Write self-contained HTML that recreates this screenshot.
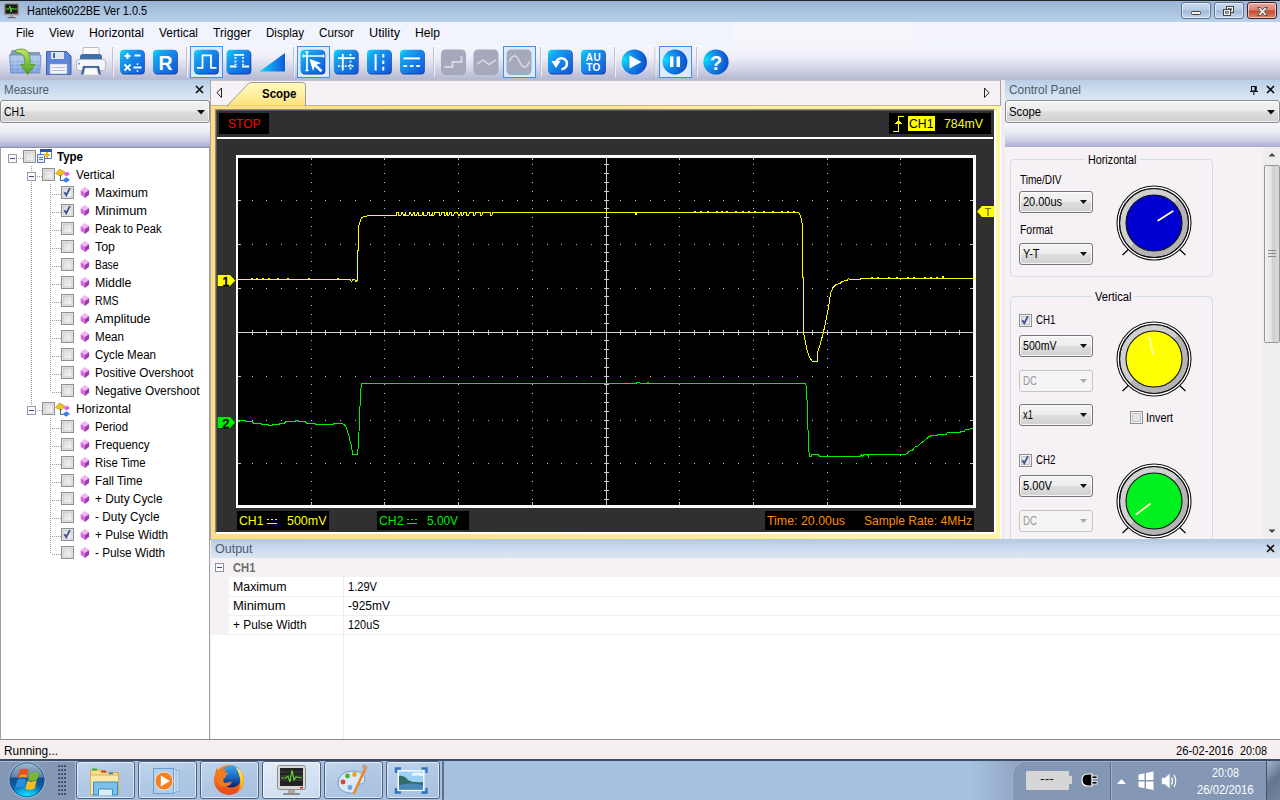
<!DOCTYPE html>
<html><head><meta charset="utf-8"><title>Hantek6022BE Ver 1.0.5</title>
<style>
html,body{margin:0;padding:0;}
body{width:1280px;height:800px;overflow:hidden;position:relative;background:#fff;font-family:"Liberation Sans",sans-serif;font-size:12px;}
body div,body svg,body span.t{position:absolute;}
span.t{white-space:nowrap;transform-origin:0 0;display:block;}
svg{overflow:visible}
</style></head><body>
<!-- p_chrome -->
<div style="left:0px;top:0px;width:1280px;height:22px;background:linear-gradient(#98b3d5,#a6c0de 45%,#b9d1ea);"></div>
<div style="left:0px;top:0px;width:1280px;height:1px;background:#222;"></div>
<svg style="left:3px;top:2px" width="18" height="18" viewBox="0 0 18 18">
<rect x="1" y="1" width="15" height="12" rx="1" fill="#7c7c7c" stroke="#b4b4b4" stroke-width="1"/>
<rect x="2.5" y="2.5" width="12" height="9" fill="#1c1c1c"/>
<polyline points="3,7 6,7 7,4 8,10 9,6 10,7 14,7" fill="none" stroke="#5ad02a" stroke-width="1"/>
<rect x="12.5" y="11.5" width="2" height="1" fill="#e02020"/>
<rect x="7" y="13" width="3" height="2" fill="#9a9a9a"/><rect x="4.5" y="15" width="8" height="1.2" fill="#6a6a6a"/>
</svg>
<span class="t" style="left:27px;top:3px;font-size:12px;line-height:16px;color:#000;transform:scaleX(0.9088);">Hantek6022BE Ver 1.0.5</span>
<div style="left:1181.4px;top:2px;width:30px;height:17px;background:linear-gradient(#c9daee,#b6cbe3 48%,#9fb8d6 52%,#c3d7ee);border:1px solid #5d7392;border-radius:3px;box-sizing:border-box;box-shadow:inset 0 0 0 1px rgba(255,255,255,.55)"></div>
<div style="left:1214.4px;top:2px;width:30px;height:17px;background:linear-gradient(#c9daee,#b6cbe3 48%,#9fb8d6 52%,#c3d7ee);border:1px solid #5d7392;border-radius:3px;box-sizing:border-box;box-shadow:inset 0 0 0 1px rgba(255,255,255,.55)"></div>
<div style="left:1247.4px;top:2px;width:30px;height:17px;background:linear-gradient(#e9a99c,#dc8070 48%,#c44a2e 52%,#d98670);border:1px solid #4a1c20;border-radius:3px;box-sizing:border-box;box-shadow:inset 0 0 0 1px rgba(255,255,255,.55)"></div>
<svg style="left:1181.4px;top:2.5px" width="97" height="17" viewBox="0 0 97 17">
<rect x="10.5" y="8.5" width="9" height="3" rx="1" fill="#f4f4f4" stroke="#444" stroke-width="1"/>
<rect x="45.5" y="3.5" width="7" height="6" fill="#f4f4f4" stroke="#444"/><rect x="47.5" y="5.5" width="3" height="2" fill="#9fb8d6" stroke="#444" stroke-width=".6"/>
<rect x="42.5" y="6.5" width="7" height="6" fill="#f4f4f4" stroke="#444"/><rect x="44.5" y="8.5" width="3" height="2" fill="#9fb8d6" stroke="#444" stroke-width=".6"/>
<path d="M76.5 4.5 L79.5 4.5 L81.5 7 L83.5 4.5 L86.5 4.5 L83.3 8.5 L86.5 12.5 L83.5 12.5 L81.5 10 L79.5 12.5 L76.5 12.5 L79.7 8.5 Z" fill="#f6f6f6" stroke="#555" stroke-width="1"/>
</svg>
<div style="left:0px;top:22px;width:1280px;height:23px;background:#f1f3fd;"></div>
<div style="left:732px;top:23px;width:181px;height:21px;background:#f7f4fa;"></div>
<div style="left:913px;top:23px;width:367px;height:21px;background:#f4f4fc;"></div>
<span class="t" style="left:16px;top:26px;font-size:12px;line-height:15px;color:#000;transform:scaleX(0.9305);">File</span>
<span class="t" style="left:49px;top:26px;font-size:12px;line-height:15px;color:#000;transform:scaleX(0.9691);">View</span>
<span class="t" style="left:89px;top:26px;font-size:12px;line-height:15px;color:#000;transform:scaleX(1.0179);">Horizontal</span>
<span class="t" style="left:159px;top:26px;font-size:12px;line-height:15px;color:#000;transform:scaleX(0.9909);">Vertical</span>
<span class="t" style="left:213px;top:26px;font-size:12px;line-height:15px;color:#000;transform:scaleX(1.0112);">Trigger</span>
<span class="t" style="left:266px;top:26px;font-size:12px;line-height:15px;color:#000;transform:scaleX(0.9655);">Display</span>
<span class="t" style="left:319px;top:26px;font-size:12px;line-height:15px;color:#000;transform:scaleX(0.9718);">Cursor</span>
<span class="t" style="left:369px;top:26px;font-size:12px;line-height:15px;color:#000;transform:scaleX(1.0564);">Utility</span>
<span class="t" style="left:415px;top:26px;font-size:12px;line-height:15px;color:#000;transform:scaleX(1.0127);">Help</span>
<div style="left:0px;top:45px;width:1280px;height:35px;background:linear-gradient(#f6f6fd,#eeeef8 35%,#d5d7e8 65%,#b3b7d2);"></div>
<div style="left:0px;top:79px;width:1280px;height:1px;background:#b9bcd0;"></div>
<!-- p_toolbar -->
<svg style="left:0;top:0" width="760" height="80" viewBox="0 0 760 80">
<defs>
<linearGradient id="gb" x1="0" y1="0" x2="1" y2="1"><stop offset="0" stop-color="#08e4ff"/><stop offset=".22" stop-color="#18a4ee"/><stop offset=".55" stop-color="#1580e6"/><stop offset="1" stop-color="#0c58d8"/></linearGradient>
<linearGradient id="gt" x1="0" y1="0" x2="1" y2="0"><stop offset="0" stop-color="#08dcff"/><stop offset=".6" stop-color="#1488e8"/><stop offset="1" stop-color="#0c5cd8"/></linearGradient>
<radialGradient id="gc" cx=".1" cy=".4" r=".95"><stop offset="0" stop-color="#08e0ff"/><stop offset=".4" stop-color="#1690ea"/><stop offset="1" stop-color="#0a48c8"/></radialGradient>
<linearGradient id="gfold" x1="0" y1="0" x2="0" y2="1"><stop offset="0" stop-color="#b8cdea"/><stop offset="1" stop-color="#7099da"/></linearGradient>
<linearGradient id="garrow" x1="0" y1="0" x2="0" y2="1"><stop offset="0" stop-color="#c4e46a"/><stop offset="1" stop-color="#4aa020"/></linearGradient>
</defs>
<g>
<path d="M10.500 55 l1.500 -4.500 h8 l2 2 h17.500 v4z" fill="#8c9db8" stroke="#74869f" stroke-width=".8"/>
<path d="M9.500 55 h31.500 l-1.200 18 h-29z" fill="url(#gfold)" stroke="#6f8fc4" stroke-width=".9"/>
<path d="M10.500 59.500 h30 M10.500 63.500 h30 M11 67.500 h29 M11 71 h29 M15 55.500 v17 M20 55.500 v17 M25 55.500 v17 M30 55.500 v17 M35 55.500 v17" stroke="#d4e2f6" stroke-width=".5" stroke-opacity=".6"/>
<path d="M15.700 50 q8 -2.500 12 1.500 q2.600 3 2.600 13 h4.700 l-7.300 10 l-7.300 -10 h4.400 q.3 -7 -2 -9.500 q-2 -2.300 -7.100 -2.500z" fill="url(#garrow)" stroke="#4c9620" stroke-width=".8"/>
</g>
<g>
<path d="M46.500 51.500 h20 l4.500 4.500 v18.500 h-24.500z" fill="#5c86d6" stroke="#3f5fae"/>
<rect x="51" y="52" width="13" height="7" fill="#dfe6f4"/><rect x="53" y="53" width="2" height="5" fill="#4a68b0"/>
<rect x="50" y="64" width="17" height="10" fill="#f2f4fa" stroke="#9aa8cc" stroke-width=".6"/>
<rect x="52" y="67" width="13" height="1" fill="#b8c2dc"/><rect x="52" y="70" width="13" height="1" fill="#b8c2dc"/>
</g>
<g>
<rect x="83" y="47.500" width="16" height="9" rx="1" fill="#fbfbfd" stroke="#b9bccc"/>
<path d="M80 57 q0 -3 3 -3 h16 q3 0 3 3 v3 h-22z" fill="#3f6fa8"/>
<rect x="76.500" y="59.500" width="29" height="11" rx="2.500" fill="#f4f5f9" stroke="#b4b8c8"/>
<rect x="78" y="63" width="2" height="1.500" fill="#5aa0e0"/>
<path d="M83 66 h16 l2 8.500 h-20z" fill="#3a5f98"/>
<path d="M85 68 h12 l1.500 7 h-15z" fill="#fafafa" stroke="#c4c6d0" stroke-width=".6"/>
</g>
<rect x="112" y="47" width="1" height="30" fill="#c4c0cc"/><rect x="113" y="47" width="1" height="30" fill="#f6f6fc" fill-opacity=".8"/>
<rect x="120.6" y="50.5" width="24.2" height="24" rx="4" fill="#1c3c9c"/><rect x="120" y="49.7" width="24.1" height="23.9" rx="4" fill="url(#gb)"/>
<g stroke="#fff" stroke-width="2" fill="#fff">
<path d="M124.500 56 h6 M127.500 53 v6" /><path d="M134.500 55.500 h6"/>
<path d="M124.500 64.500 l6 6 M130.500 64.500 l-6 6" stroke-width="1.800"/>
<path d="M133.500 67.500 h8"/><rect x="136.700" y="63.300" width="1.600" height="1.600" stroke="none"/><rect x="136.700" y="70.200" width="1.600" height="1.600" stroke="none"/></g>
<rect x="153.6" y="50.5" width="24.2" height="24" rx="4" fill="#1c3c9c"/><rect x="153" y="49.7" width="24.1" height="23.9" rx="4" fill="url(#gb)"/>
<text x="165.500" y="70" font-family="Liberation Sans,sans-serif" font-weight="bold" font-size="19.5" fill="#fff" text-anchor="middle">R</text>
<rect x="186" y="47" width="1" height="30" fill="#c4c0cc"/><rect x="187" y="47" width="1" height="30" fill="#f6f6fc" fill-opacity=".8"/>
<rect x="190.5" y="46.5" width="32" height="31" fill="#deeafb" stroke="#3d8ff0"/>
<rect x="194.6" y="50.5" width="24.2" height="24" rx="4" fill="#1c3c9c"/><rect x="194" y="49.7" width="24.1" height="23.9" rx="4" fill="url(#gb)"/>
<path d="M197 67.800 h5.500 v-12.500 h8.500 v12.500 h5.500" fill="none" stroke="#fff" stroke-width="1.800"/>
<rect x="227.1" y="50.5" width="24.2" height="24" rx="4" fill="#1c3c9c"/><rect x="226.5" y="49.7" width="24.1" height="23.9" rx="4" fill="url(#gb)"/>
<path d="M230 66.500 h6.500 M242 66.500 h7 M234 54.800 h10" fill="none" stroke="#fff" stroke-width="1.800"/><path d="M235.500 57 v8 M243 57 v8" fill="none" stroke="#fff" stroke-width="1.800" stroke-dasharray="1.800 1.600"/>
<path d="M259.500 71.500 L285 71.500 L285 53 Z" fill="url(#gt)"/>
<rect x="293" y="47" width="1" height="30" fill="#c4c0cc"/><rect x="294" y="47" width="1" height="30" fill="#f6f6fc" fill-opacity=".8"/>
<rect x="297.5" y="46.5" width="32" height="31" fill="#deeafb" stroke="#3d8ff0"/>
<rect x="301.1" y="50.5" width="24.2" height="24" rx="4" fill="#1c3c9c"/><rect x="300.5" y="49.7" width="24.1" height="23.9" rx="4" fill="url(#gb)"/>
<path d="M303 56 h21 M307 51.500 v19.500 M305.500 52 h3 M305.500 70.500 h3 M303.500 54.500 v3 M323.500 54.500 v3" stroke="#fff" stroke-width="1.700" fill="none"/><path d="M309.500 59 l11.500 4 l-4.500 1.800 l6 5.500 l-2 2 l-5.800 -5.800 l-1.700 4.500z" fill="#fff"/>
<rect x="334.4" y="50.5" width="24.2" height="24" rx="4" fill="#1c3c9c"/><rect x="333.8" y="49.7" width="24.1" height="23.9" rx="4" fill="url(#gb)"/>
<path d="M338 58.200 h17 M342.800 54 v16.500" stroke="#fff" stroke-width="1.800" fill="none"/><path d="M338 66.200 h17 M350.500 54 v16.500" stroke="#fff" stroke-width="1.800" stroke-dasharray="1.800 1.600" fill="none"/>
<rect x="367.6" y="50.5" width="24.2" height="24" rx="4" fill="#1c3c9c"/><rect x="367" y="49.7" width="24.1" height="23.9" rx="4" fill="url(#gb)"/>
<path d="M375.600 54 v16.500" stroke="#fff" stroke-width="2" fill="none"/><path d="M383.300 54 v16.500" stroke="#fff" stroke-width="2" stroke-dasharray="3.600 2.800" fill="none"/>
<rect x="400.6" y="50.5" width="24.2" height="24" rx="4" fill="#1c3c9c"/><rect x="400" y="49.7" width="24.1" height="23.9" rx="4" fill="url(#gb)"/>
<path d="M403.500 58.400 h16.500" stroke="#fff" stroke-width="2" fill="none"/><path d="M403.500 66 h16.500" stroke="#fff" stroke-width="2" stroke-dasharray="3.600 2.800" fill="none"/>
<rect x="433" y="47" width="1" height="30" fill="#c4c0cc"/><rect x="434" y="47" width="1" height="30" fill="#f6f6fc" fill-opacity=".8"/>
<rect x="441" y="49.5" width="25" height="25.5" rx="4.500" fill="#a6a9bb"/>
<path d="M444.500 67 h8 v-5 h9 v-6" fill="none" stroke="#d4d6e0" stroke-width="2"/>
<rect x="473.5" y="49.5" width="25" height="25.5" rx="4.500" fill="#a6a9bb"/>
<path d="M477 64 l6 -4 l6 4.500 l7 -4.500" fill="none" stroke="#d4d6e0" stroke-width="1.600"/>
<rect x="503.5" y="46.5" width="32" height="31" fill="#deeafb" stroke="#3d8ff0"/>
<rect x="506.5" y="49.5" width="25" height="25.5" rx="4.500" fill="#a6a9bb"/>
<path d="M509.500 61.500 c3 -7.500 7 -7.500 10 0 s7 7.500 10 0" fill="none" stroke="#d4d6e0" stroke-width="1.600"/>
<rect x="540" y="47" width="1" height="30" fill="#c4c0cc"/><rect x="541" y="47" width="1" height="30" fill="#f6f6fc" fill-opacity=".8"/>
<rect x="548.6" y="50.5" width="24.2" height="24" rx="4" fill="#1c3c9c"/><rect x="548" y="49.7" width="24.1" height="23.9" rx="4" fill="url(#gb)"/>
<path d="M556 64.500 a5.500 5.500 0 1 1 5.500 4.700" fill="none" stroke="#fff" stroke-width="2.600"/><path d="M551.500 61 l9 0 l-4.500 7z" fill="#fff"/>
<rect x="581.6" y="50.5" width="24.2" height="24" rx="4" fill="#1c3c9c"/><rect x="581" y="49.7" width="24.1" height="23.9" rx="4" fill="url(#gb)"/>
<text x="593.500" y="60.500" font-family="Liberation Sans,sans-serif" font-weight="bold" font-size="10" fill="#fff" text-anchor="middle" letter-spacing=".5">AU</text><text x="593.500" y="70.500" font-family="Liberation Sans,sans-serif" font-weight="bold" font-size="10" fill="#fff" text-anchor="middle" letter-spacing=".5">TO</text>
<rect x="614" y="47" width="1" height="30" fill="#c4c0cc"/><rect x="615" y="47" width="1" height="30" fill="#f6f6fc" fill-opacity=".8"/>
<circle cx="634.300" cy="62" r="12.600" fill="url(#gc)"/><path d="M629.500 55.500 l12 6.500 l-12 6.500z" fill="#fff"/>
<rect x="654.5" y="47" width="1" height="30" fill="#c4c0cc"/><rect x="655.5" y="47" width="1" height="30" fill="#f6f6fc" fill-opacity=".8"/>
<rect x="659.5" y="46.5" width="32" height="31" fill="#deeafb" stroke="#3d8ff0"/>
<circle cx="675" cy="62" r="12.400" fill="url(#gc)"/><rect x="670" y="56.500" width="3.400" height="10.500" fill="#fff"/><rect x="676.600" y="56.500" width="3.400" height="10.500" fill="#fff"/>
<rect x="696" y="47" width="1" height="30" fill="#c4c0cc"/><rect x="697" y="47" width="1" height="30" fill="#f6f6fc" fill-opacity=".8"/>
<circle cx="716" cy="62" r="12.600" fill="url(#gc)"/><text x="716" y="69.500" font-family="Liberation Sans,sans-serif" font-weight="bold" font-size="20" fill="#fff" text-anchor="middle">?</text>
</svg>
<!-- p_left -->
<div style="left:0px;top:80px;width:211px;height:660px;background:#f5f0f4;"></div>
<div style="left:0px;top:80px;width:210px;height:20px;background:linear-gradient(#b9cde6,#cbdbee 45%,#dce7f4);"></div>
<span class="t" style="left:4px;top:82px;font-size:12px;line-height:16px;color:#4d5b70;transform:scaleX(0.9639);">Measure</span>
<svg style="left:195px;top:85px" width="9" height="9"><path d="M1 1 L8 8 M8 1 L1 8" stroke="#111" stroke-width="1.700" fill="none"/></svg>
<div style="left:0px;top:100px;width:210px;height:23px;background:linear-gradient(#f3f3f3,#ebebeb 48%,#dcdcdc 52%,#d0d0d0);border:1px solid #8a8a8f;border-radius:3px;box-sizing:border-box;box-shadow:inset 0 0 0 1px rgba(255,255,255,.7)"></div>
<svg style="left:197px;top:110px" width="9" height="5"><path d="M0 0 h8 l-4 4.500z" fill="#111"/></svg>
<span class="t" style="left:4px;top:104px;font-size:12px;line-height:16px;color:#000;transform:scaleX(0.8744);">CH1</span>
<div style="left:0px;top:123px;width:210px;height:24px;background:linear-gradient(#f7f7fc,#ececf6 35%,#cfd1e5 70%,#a9add0);"></div>
<div style="left:0px;top:147px;width:210px;height:593px;background:#fff;border:1px solid #a0a0a0;border-top-color:#8c8fa8;box-sizing:border-box"></div>
<svg style="left:0;top:147px" width="210" height="420" viewBox="0 147 210 420">
<defs><linearGradient id="cbg" x1="0" y1="0" x2="1" y2="1"><stop offset="0" stop-color="#d6d7d8"/><stop offset="1" stop-color="#f8f8f8"/></linearGradient></defs>
<path d="M18 158.500 h5" stroke="#9a9a9a" stroke-width="1" stroke-dasharray="1 1" fill="none"/>
<path d="M31.500 166 v240" stroke="#9a9a9a" stroke-width="1" stroke-dasharray="1 1" fill="none"/>
<path d="M37 176.500 h5 M37 410.500 h5" stroke="#9a9a9a" stroke-width="1" stroke-dasharray="1 1" fill="none"/>
<path d="M50.500 184 v208" stroke="#9a9a9a" stroke-width="1" stroke-dasharray="1 1" fill="none"/>
<path d="M50.500 418 v136" stroke="#9a9a9a" stroke-width="1" stroke-dasharray="1 1" fill="none"/>
<rect x="8.5" y="154.5" width="8" height="8" fill="#fafafa" stroke="#959aa5"/><rect x="10" y="158" width="5" height="1" fill="#3a4a9a"/>
<rect x="23.5" y="150.5" width="12" height="12" fill="#f4f4f4" stroke="#8e8f8f"/><rect x="25" y="152" width="9" height="9" fill="url(#cbg)" stroke="#c8c9ca" stroke-width="1"/>
<g><rect x="40.500" y="149.500" width="11" height="9" fill="#fff" stroke="#5a78c0"/><rect x="40" y="149" width="12" height="3" fill="#2a50b0"/><rect x="37.500" y="154.500" width="7" height="8" fill="#eaf0fa" stroke="#5a78c0"/><path d="M39 157.500 h4 M39 159.500 h4" stroke="#5a78c0"/><path d="M44 155 h6 M47 152 v6" stroke="#e8b820" stroke-width="2"/></g>
<rect x="27.5" y="172.5" width="8" height="8" fill="#fafafa" stroke="#959aa5"/><rect x="29" y="176" width="5" height="1" fill="#3a4a9a"/>
<rect x="42.5" y="168.5" width="12" height="12" fill="#f4f4f4" stroke="#8e8f8f"/><rect x="44" y="170" width="9" height="9" fill="url(#cbg)" stroke="#c8c9ca" stroke-width="1"/>
<g><path d="M55.500 173.5 l4 -4.500 l5.500 3 l-4 4.500z" fill="#f0c020" stroke="#b08a10" stroke-width=".6"/>
<path d="M63.500 174 l3.500 -2.500 l3 2.500 l-3.500 2.500z" fill="#e060e0"/>
<path d="M62.500 180 l4 -2.800 l3.500 2.800 l-4 2.800z" fill="#3a80e0"/>
<path d="M60.500 175 v5.500 h2.500" fill="none" stroke="#4060a0" stroke-width="1"/></g>
<rect x="27.5" y="406.5" width="8" height="8" fill="#fafafa" stroke="#959aa5"/><rect x="29" y="410" width="5" height="1" fill="#3a4a9a"/>
<rect x="42.5" y="402.5" width="12" height="12" fill="#f4f4f4" stroke="#8e8f8f"/><rect x="44" y="404" width="9" height="9" fill="url(#cbg)" stroke="#c8c9ca" stroke-width="1"/>
<g><path d="M55.500 407.5 l4 -4.500 l5.500 3 l-4 4.500z" fill="#f0c020" stroke="#b08a10" stroke-width=".6"/>
<path d="M63.500 408 l3.500 -2.500 l3 2.500 l-3.500 2.500z" fill="#e060e0"/>
<path d="M62.500 414 l4 -2.800 l3.500 2.800 l-4 2.800z" fill="#3a80e0"/>
<path d="M60.500 409 v5.500 h2.500" fill="none" stroke="#4060a0" stroke-width="1"/></g>
<path d="M52 194.5 h9" stroke="#9a9a9a" stroke-width="1" stroke-dasharray="1 1" fill="none"/>
<rect x="61.5" y="186.5" width="12" height="12" fill="#f4f4f4" stroke="#8e8f8f"/><rect x="63" y="188" width="9" height="9" fill="url(#cbg)" stroke="#c8c9ca" stroke-width="1"/><path d="M64.3 192.2 l2 3 l3.600 -7" fill="none" stroke="#3b4f8c" stroke-width="1.800"/>
<path d="M80.7 190 l4.200 -3 l4.200 3 l-4.200 3z" fill="#f3b4f2"/><path d="M80.7 190 l4.200 3 v5 l-4.200 -3.200z" fill="#d468dc"/><path d="M84.9 193 l4.200 -3 v4.800 l-4.200 3.200z" fill="#9a3cb0"/>
<path d="M52 212.5 h9" stroke="#9a9a9a" stroke-width="1" stroke-dasharray="1 1" fill="none"/>
<rect x="61.5" y="204.5" width="12" height="12" fill="#f4f4f4" stroke="#8e8f8f"/><rect x="63" y="206" width="9" height="9" fill="url(#cbg)" stroke="#c8c9ca" stroke-width="1"/><path d="M64.3 210.2 l2 3 l3.600 -7" fill="none" stroke="#3b4f8c" stroke-width="1.800"/>
<path d="M80.7 208 l4.200 -3 l4.200 3 l-4.200 3z" fill="#f3b4f2"/><path d="M80.7 208 l4.200 3 v5 l-4.200 -3.200z" fill="#d468dc"/><path d="M84.9 211 l4.200 -3 v4.800 l-4.200 3.200z" fill="#9a3cb0"/>
<path d="M52 230.5 h9" stroke="#9a9a9a" stroke-width="1" stroke-dasharray="1 1" fill="none"/>
<rect x="61.5" y="222.5" width="12" height="12" fill="#f4f4f4" stroke="#8e8f8f"/><rect x="63" y="224" width="9" height="9" fill="url(#cbg)" stroke="#c8c9ca" stroke-width="1"/>
<path d="M80.7 226 l4.200 -3 l4.200 3 l-4.200 3z" fill="#f3b4f2"/><path d="M80.7 226 l4.200 3 v5 l-4.200 -3.200z" fill="#d468dc"/><path d="M84.9 229 l4.200 -3 v4.800 l-4.200 3.200z" fill="#9a3cb0"/>
<path d="M52 248.5 h9" stroke="#9a9a9a" stroke-width="1" stroke-dasharray="1 1" fill="none"/>
<rect x="61.5" y="240.5" width="12" height="12" fill="#f4f4f4" stroke="#8e8f8f"/><rect x="63" y="242" width="9" height="9" fill="url(#cbg)" stroke="#c8c9ca" stroke-width="1"/>
<path d="M80.7 244 l4.200 -3 l4.200 3 l-4.200 3z" fill="#f3b4f2"/><path d="M80.7 244 l4.200 3 v5 l-4.200 -3.200z" fill="#d468dc"/><path d="M84.9 247 l4.200 -3 v4.800 l-4.200 3.200z" fill="#9a3cb0"/>
<path d="M52 266.5 h9" stroke="#9a9a9a" stroke-width="1" stroke-dasharray="1 1" fill="none"/>
<rect x="61.5" y="258.5" width="12" height="12" fill="#f4f4f4" stroke="#8e8f8f"/><rect x="63" y="260" width="9" height="9" fill="url(#cbg)" stroke="#c8c9ca" stroke-width="1"/>
<path d="M80.7 262 l4.200 -3 l4.200 3 l-4.200 3z" fill="#f3b4f2"/><path d="M80.7 262 l4.200 3 v5 l-4.200 -3.200z" fill="#d468dc"/><path d="M84.9 265 l4.200 -3 v4.800 l-4.200 3.200z" fill="#9a3cb0"/>
<path d="M52 284.5 h9" stroke="#9a9a9a" stroke-width="1" stroke-dasharray="1 1" fill="none"/>
<rect x="61.5" y="276.5" width="12" height="12" fill="#f4f4f4" stroke="#8e8f8f"/><rect x="63" y="278" width="9" height="9" fill="url(#cbg)" stroke="#c8c9ca" stroke-width="1"/>
<path d="M80.7 280 l4.200 -3 l4.200 3 l-4.200 3z" fill="#f3b4f2"/><path d="M80.7 280 l4.200 3 v5 l-4.200 -3.200z" fill="#d468dc"/><path d="M84.9 283 l4.200 -3 v4.800 l-4.200 3.200z" fill="#9a3cb0"/>
<path d="M52 302.5 h9" stroke="#9a9a9a" stroke-width="1" stroke-dasharray="1 1" fill="none"/>
<rect x="61.5" y="294.5" width="12" height="12" fill="#f4f4f4" stroke="#8e8f8f"/><rect x="63" y="296" width="9" height="9" fill="url(#cbg)" stroke="#c8c9ca" stroke-width="1"/>
<path d="M80.7 298 l4.200 -3 l4.200 3 l-4.200 3z" fill="#f3b4f2"/><path d="M80.7 298 l4.200 3 v5 l-4.200 -3.200z" fill="#d468dc"/><path d="M84.9 301 l4.200 -3 v4.800 l-4.200 3.200z" fill="#9a3cb0"/>
<path d="M52 320.5 h9" stroke="#9a9a9a" stroke-width="1" stroke-dasharray="1 1" fill="none"/>
<rect x="61.5" y="312.5" width="12" height="12" fill="#f4f4f4" stroke="#8e8f8f"/><rect x="63" y="314" width="9" height="9" fill="url(#cbg)" stroke="#c8c9ca" stroke-width="1"/>
<path d="M80.7 316 l4.200 -3 l4.200 3 l-4.200 3z" fill="#f3b4f2"/><path d="M80.7 316 l4.200 3 v5 l-4.200 -3.200z" fill="#d468dc"/><path d="M84.9 319 l4.200 -3 v4.800 l-4.200 3.200z" fill="#9a3cb0"/>
<path d="M52 338.5 h9" stroke="#9a9a9a" stroke-width="1" stroke-dasharray="1 1" fill="none"/>
<rect x="61.5" y="330.5" width="12" height="12" fill="#f4f4f4" stroke="#8e8f8f"/><rect x="63" y="332" width="9" height="9" fill="url(#cbg)" stroke="#c8c9ca" stroke-width="1"/>
<path d="M80.7 334 l4.200 -3 l4.200 3 l-4.200 3z" fill="#f3b4f2"/><path d="M80.7 334 l4.200 3 v5 l-4.200 -3.200z" fill="#d468dc"/><path d="M84.9 337 l4.200 -3 v4.800 l-4.200 3.200z" fill="#9a3cb0"/>
<path d="M52 356.5 h9" stroke="#9a9a9a" stroke-width="1" stroke-dasharray="1 1" fill="none"/>
<rect x="61.5" y="348.5" width="12" height="12" fill="#f4f4f4" stroke="#8e8f8f"/><rect x="63" y="350" width="9" height="9" fill="url(#cbg)" stroke="#c8c9ca" stroke-width="1"/>
<path d="M80.7 352 l4.200 -3 l4.200 3 l-4.200 3z" fill="#f3b4f2"/><path d="M80.7 352 l4.200 3 v5 l-4.200 -3.200z" fill="#d468dc"/><path d="M84.9 355 l4.200 -3 v4.800 l-4.200 3.200z" fill="#9a3cb0"/>
<path d="M52 374.5 h9" stroke="#9a9a9a" stroke-width="1" stroke-dasharray="1 1" fill="none"/>
<rect x="61.5" y="366.5" width="12" height="12" fill="#f4f4f4" stroke="#8e8f8f"/><rect x="63" y="368" width="9" height="9" fill="url(#cbg)" stroke="#c8c9ca" stroke-width="1"/>
<path d="M80.7 370 l4.200 -3 l4.200 3 l-4.200 3z" fill="#f3b4f2"/><path d="M80.7 370 l4.200 3 v5 l-4.200 -3.200z" fill="#d468dc"/><path d="M84.9 373 l4.200 -3 v4.800 l-4.200 3.200z" fill="#9a3cb0"/>
<path d="M52 392.5 h9" stroke="#9a9a9a" stroke-width="1" stroke-dasharray="1 1" fill="none"/>
<rect x="61.5" y="384.5" width="12" height="12" fill="#f4f4f4" stroke="#8e8f8f"/><rect x="63" y="386" width="9" height="9" fill="url(#cbg)" stroke="#c8c9ca" stroke-width="1"/>
<path d="M80.7 388 l4.200 -3 l4.200 3 l-4.200 3z" fill="#f3b4f2"/><path d="M80.7 388 l4.200 3 v5 l-4.200 -3.200z" fill="#d468dc"/><path d="M84.9 391 l4.200 -3 v4.800 l-4.200 3.200z" fill="#9a3cb0"/>
<path d="M52 428.5 h9" stroke="#9a9a9a" stroke-width="1" stroke-dasharray="1 1" fill="none"/>
<rect x="61.5" y="420.5" width="12" height="12" fill="#f4f4f4" stroke="#8e8f8f"/><rect x="63" y="422" width="9" height="9" fill="url(#cbg)" stroke="#c8c9ca" stroke-width="1"/>
<path d="M80.7 424 l4.200 -3 l4.200 3 l-4.200 3z" fill="#f3b4f2"/><path d="M80.7 424 l4.200 3 v5 l-4.200 -3.200z" fill="#d468dc"/><path d="M84.9 427 l4.200 -3 v4.800 l-4.200 3.200z" fill="#9a3cb0"/>
<path d="M52 446.5 h9" stroke="#9a9a9a" stroke-width="1" stroke-dasharray="1 1" fill="none"/>
<rect x="61.5" y="438.5" width="12" height="12" fill="#f4f4f4" stroke="#8e8f8f"/><rect x="63" y="440" width="9" height="9" fill="url(#cbg)" stroke="#c8c9ca" stroke-width="1"/>
<path d="M80.7 442 l4.200 -3 l4.200 3 l-4.200 3z" fill="#f3b4f2"/><path d="M80.7 442 l4.200 3 v5 l-4.200 -3.200z" fill="#d468dc"/><path d="M84.9 445 l4.200 -3 v4.800 l-4.200 3.200z" fill="#9a3cb0"/>
<path d="M52 464.5 h9" stroke="#9a9a9a" stroke-width="1" stroke-dasharray="1 1" fill="none"/>
<rect x="61.5" y="456.5" width="12" height="12" fill="#f4f4f4" stroke="#8e8f8f"/><rect x="63" y="458" width="9" height="9" fill="url(#cbg)" stroke="#c8c9ca" stroke-width="1"/>
<path d="M80.7 460 l4.200 -3 l4.200 3 l-4.200 3z" fill="#f3b4f2"/><path d="M80.7 460 l4.200 3 v5 l-4.200 -3.200z" fill="#d468dc"/><path d="M84.9 463 l4.200 -3 v4.800 l-4.200 3.200z" fill="#9a3cb0"/>
<path d="M52 482.5 h9" stroke="#9a9a9a" stroke-width="1" stroke-dasharray="1 1" fill="none"/>
<rect x="61.5" y="474.5" width="12" height="12" fill="#f4f4f4" stroke="#8e8f8f"/><rect x="63" y="476" width="9" height="9" fill="url(#cbg)" stroke="#c8c9ca" stroke-width="1"/>
<path d="M80.7 478 l4.200 -3 l4.200 3 l-4.200 3z" fill="#f3b4f2"/><path d="M80.7 478 l4.200 3 v5 l-4.200 -3.200z" fill="#d468dc"/><path d="M84.9 481 l4.200 -3 v4.800 l-4.200 3.200z" fill="#9a3cb0"/>
<path d="M52 500.5 h9" stroke="#9a9a9a" stroke-width="1" stroke-dasharray="1 1" fill="none"/>
<rect x="61.5" y="492.5" width="12" height="12" fill="#f4f4f4" stroke="#8e8f8f"/><rect x="63" y="494" width="9" height="9" fill="url(#cbg)" stroke="#c8c9ca" stroke-width="1"/>
<path d="M80.7 496 l4.200 -3 l4.200 3 l-4.200 3z" fill="#f3b4f2"/><path d="M80.7 496 l4.200 3 v5 l-4.200 -3.200z" fill="#d468dc"/><path d="M84.9 499 l4.200 -3 v4.800 l-4.200 3.200z" fill="#9a3cb0"/>
<path d="M52 518.5 h9" stroke="#9a9a9a" stroke-width="1" stroke-dasharray="1 1" fill="none"/>
<rect x="61.5" y="510.5" width="12" height="12" fill="#f4f4f4" stroke="#8e8f8f"/><rect x="63" y="512" width="9" height="9" fill="url(#cbg)" stroke="#c8c9ca" stroke-width="1"/>
<path d="M80.7 514 l4.200 -3 l4.200 3 l-4.200 3z" fill="#f3b4f2"/><path d="M80.7 514 l4.200 3 v5 l-4.200 -3.200z" fill="#d468dc"/><path d="M84.9 517 l4.200 -3 v4.800 l-4.200 3.200z" fill="#9a3cb0"/>
<path d="M52 536.5 h9" stroke="#9a9a9a" stroke-width="1" stroke-dasharray="1 1" fill="none"/>
<rect x="61.5" y="528.5" width="12" height="12" fill="#f4f4f4" stroke="#8e8f8f"/><rect x="63" y="530" width="9" height="9" fill="url(#cbg)" stroke="#c8c9ca" stroke-width="1"/><path d="M64.3 534.2 l2 3 l3.600 -7" fill="none" stroke="#3b4f8c" stroke-width="1.800"/>
<path d="M80.7 532 l4.200 -3 l4.200 3 l-4.200 3z" fill="#f3b4f2"/><path d="M80.7 532 l4.200 3 v5 l-4.200 -3.200z" fill="#d468dc"/><path d="M84.9 535 l4.200 -3 v4.800 l-4.200 3.200z" fill="#9a3cb0"/>
<path d="M52 554.5 h9" stroke="#9a9a9a" stroke-width="1" stroke-dasharray="1 1" fill="none"/>
<rect x="61.5" y="546.5" width="12" height="12" fill="#f4f4f4" stroke="#8e8f8f"/><rect x="63" y="548" width="9" height="9" fill="url(#cbg)" stroke="#c8c9ca" stroke-width="1"/>
<path d="M80.7 550 l4.200 -3 l4.200 3 l-4.200 3z" fill="#f3b4f2"/><path d="M80.7 550 l4.200 3 v5 l-4.200 -3.200z" fill="#d468dc"/><path d="M84.9 553 l4.200 -3 v4.800 l-4.200 3.200z" fill="#9a3cb0"/>
</svg>
<span class="t" style="left:57.2px;top:148px;font-size:13px;line-height:17px;color:#000;font-weight:bold;transform:scaleX(0.8851);">Type</span>
<span class="t" style="left:76px;top:167px;font-size:12px;line-height:16px;color:#000;transform:scaleX(0.9782);">Vertical</span>
<span class="t" style="left:76px;top:401px;font-size:12px;line-height:16px;color:#000;transform:scaleX(1.0179);">Horizontal</span>
<span class="t" style="left:94.7px;top:185px;font-size:12px;line-height:16px;color:#000;transform:scaleX(1.0189);">Maximum</span>
<span class="t" style="left:94.7px;top:203px;font-size:12px;line-height:16px;color:#000;transform:scaleX(1.0680);">Minimum</span>
<span class="t" style="left:94.7px;top:221px;font-size:12px;line-height:16px;color:#000;transform:scaleX(0.9321);">Peak to Peak</span>
<span class="t" style="left:94.7px;top:239px;font-size:12px;line-height:16px;color:#000;transform:scaleX(1.0339);">Top</span>
<span class="t" style="left:94.7px;top:257px;font-size:12px;line-height:16px;color:#000;transform:scaleX(0.8594);">Base</span>
<span class="t" style="left:94.7px;top:275px;font-size:12px;line-height:16px;color:#000;transform:scaleX(1.0323);">Middle</span>
<span class="t" style="left:94.7px;top:293px;font-size:12px;line-height:16px;color:#000;transform:scaleX(0.8811);">RMS</span>
<span class="t" style="left:94.7px;top:311px;font-size:12px;line-height:16px;color:#000;transform:scaleX(1.0401);">Amplitude</span>
<span class="t" style="left:94.7px;top:329px;font-size:12px;line-height:16px;color:#000;transform:scaleX(0.9662);">Mean</span>
<span class="t" style="left:94.7px;top:347px;font-size:12px;line-height:16px;color:#000;transform:scaleX(0.9628);">Cycle Mean</span>
<span class="t" style="left:94.7px;top:365px;font-size:12px;line-height:16px;color:#000;transform:scaleX(0.9783);">Positive Overshoot</span>
<span class="t" style="left:94.7px;top:383px;font-size:12px;line-height:16px;color:#000;transform:scaleX(0.9856);">Negative Overshoot</span>
<span class="t" style="left:94.7px;top:419px;font-size:12px;line-height:16px;color:#000;transform:scaleX(0.9514);">Period</span>
<span class="t" style="left:94.7px;top:437px;font-size:12px;line-height:16px;color:#000;transform:scaleX(0.9614);">Frequency</span>
<span class="t" style="left:94.7px;top:455px;font-size:12px;line-height:16px;color:#000;transform:scaleX(0.9464);">Rise Time</span>
<span class="t" style="left:94.7px;top:473px;font-size:12px;line-height:16px;color:#000;transform:scaleX(0.9756);">Fall Time</span>
<span class="t" style="left:94.7px;top:491px;font-size:12px;line-height:16px;color:#000;transform:scaleX(0.9874);">+ Duty Cycle</span>
<span class="t" style="left:94.7px;top:509px;font-size:12px;line-height:16px;color:#000;transform:scaleX(0.9871);">- Duty Cycle</span>
<span class="t" style="left:94.7px;top:527px;font-size:12px;line-height:16px;color:#000;transform:scaleX(0.9817);">+ Pulse Width</span>
<span class="t" style="left:94.7px;top:545px;font-size:12px;line-height:16px;color:#000;transform:scaleX(0.9812);">- Pulse Width</span>
<!-- p_scope -->
<div style="left:210px;top:80px;width:791px;height:26px;background:#f6f1f5;border-left:1px solid #a5a5a5;border-right:1px solid #a5a5a5;box-sizing:border-box"></div>
<div style="left:1001px;top:80px;width:4px;height:460px;background:#f1ecf0;"></div>
<div style="left:211px;top:80px;width:789px;height:1px;background:#c2c2ca;"></div>
<div style="left:210px;top:106px;width:1px;height:434px;background:#a8a8b4;"></div>
<div style="left:211px;top:105px;width:789px;height:434px;background:linear-gradient(90deg,#ffdf7c,#ffe486 30%,#fdf6a6);"></div>
<div style="left:211px;top:105px;width:789px;height:1px;background:#c9b98a;"></div>
<svg style="left:210px;top:80px" width="800" height="27" viewBox="210 80 800 27">
<defs><linearGradient id="tabg" x1="0" y1="0" x2="0" y2="1"><stop offset="0" stop-color="#fffac0"/><stop offset=".55" stop-color="#ffef9c"/><stop offset="1" stop-color="#ffdf7c"/></linearGradient></defs>
<path d="M227 106 L248.500 83.500 Q250 82.500 252 82.500 L302.500 82.500 Q305.500 82.500 305.500 85.500 L305.500 106 Z" fill="url(#tabg)" stroke="#9c9c9c" stroke-width="1"/>
<rect x="228" y="105.500" width="77" height="1.500" fill="#ffdf7c"/>
<path d="M221.500 88 v9.500 l-4.500 -4.750z" fill="none" stroke="#222" stroke-width="1"/>
<path d="M984.500 88 v9.500 l4.500 -4.750z" fill="none" stroke="#222" stroke-width="1"/>
</svg>
<span class="t" style="left:262px;top:86px;font-size:12px;line-height:16px;color:#000;font-weight:bold;transform:scaleX(0.9583);">Scope</span>
<div style="left:215px;top:109px;width:781px;height:425px;background:#303030;box-sizing:border-box;border-top:1px solid #8a8a8a;border-left:1px solid #8a8a8a;border-right:2px solid #fff;border-bottom:2px solid #fff"></div>
<div style="left:216px;top:110px;width:778px;height:1px;background:#555;"></div>
<div style="left:216px;top:110px;width:1px;height:421px;background:#555;"></div>
<div style="left:217px;top:137px;width:776px;height:2px;background:#fff;"></div>
<div style="left:219px;top:113px;width:50px;height:21px;background:#000;"></div>
<span class="t" style="left:228px;top:117px;font-size:12px;line-height:15px;color:#f00;transform:scaleX(1.0019);">STOP</span>
<div style="left:889px;top:113px;width:102px;height:21px;background:#000;"></div>
<svg style="left:889px;top:113px" width="30" height="21" viewBox="889 113 30 21" shape-rendering="crispEdges"><path d="M893 131.500 h5.500 v-15 h5.500" fill="none" stroke="#ff0" stroke-width="1"/><path d="M895 124 h7 l-3.500 -4z" fill="#ff0"/></svg>
<div style="left:908px;top:116px;width:27px;height:15px;background:#ff0;"></div>
<span class="t" style="left:908.5px;top:116px;font-size:13px;line-height:15px;color:#000;transform:scaleX(0.9417);">CH1</span>
<span class="t" style="left:943.5px;top:116px;font-size:13px;line-height:15px;color:#ff0;transform:scaleX(0.9465);">784mV</span>
<div style="left:235.7px;top:154.8px;width:740.5px;height:353.3px;background:#fbf8fb;"></div>
<div style="left:235.7px;top:154.8px;width:740.5px;height:1.5px;background:#fff;"></div>
<div style="left:235.7px;top:154.8px;width:1.5px;height:353.3px;background:#fff;"></div>
<div style="left:238.4px;top:157.6px;width:734.7px;height:347.5px;background:#000;"></div>
<svg style="left:236px;top:155px" width="740" height="353" viewBox="236 155 740 353" shape-rendering="crispEdges"><g fill="#c4c4c4"><rect x="238" y="200" width="3" height="1"/><rect x="252" y="200" width="1" height="1"/><rect x="266" y="200" width="1" height="1"/><rect x="281" y="200" width="1" height="1"/><rect x="296" y="200" width="1" height="1"/><rect x="311" y="200" width="1" height="1"/><rect x="325" y="200" width="1" height="1"/><rect x="340" y="200" width="1" height="1"/><rect x="355" y="200" width="1" height="1"/><rect x="370" y="200" width="1" height="1"/><rect x="384" y="200" width="1" height="1"/><rect x="399" y="200" width="1" height="1"/><rect x="414" y="200" width="1" height="1"/><rect x="429" y="200" width="1" height="1"/><rect x="443" y="200" width="1" height="1"/><rect x="458" y="200" width="1" height="1"/><rect x="473" y="200" width="1" height="1"/><rect x="488" y="200" width="1" height="1"/><rect x="502" y="200" width="1" height="1"/><rect x="517" y="200" width="1" height="1"/><rect x="532" y="200" width="1" height="1"/><rect x="547" y="200" width="1" height="1"/><rect x="561" y="200" width="1" height="1"/><rect x="576" y="200" width="1" height="1"/><rect x="591" y="200" width="1" height="1"/><rect x="606" y="200" width="1" height="1"/><rect x="620" y="200" width="1" height="1"/><rect x="635" y="200" width="1" height="1"/><rect x="650" y="200" width="1" height="1"/><rect x="664" y="200" width="1" height="1"/><rect x="679" y="200" width="1" height="1"/><rect x="694" y="200" width="1" height="1"/><rect x="709" y="200" width="1" height="1"/><rect x="723" y="200" width="1" height="1"/><rect x="738" y="200" width="1" height="1"/><rect x="753" y="200" width="1" height="1"/><rect x="768" y="200" width="1" height="1"/><rect x="782" y="200" width="1" height="1"/><rect x="797" y="200" width="1" height="1"/><rect x="812" y="200" width="1" height="1"/><rect x="827" y="200" width="1" height="1"/><rect x="841" y="200" width="1" height="1"/><rect x="856" y="200" width="1" height="1"/><rect x="871" y="200" width="1" height="1"/><rect x="886" y="200" width="1" height="1"/><rect x="900" y="200" width="1" height="1"/><rect x="915" y="200" width="1" height="1"/><rect x="930" y="200" width="1" height="1"/><rect x="945" y="200" width="1" height="1"/><rect x="959" y="200" width="1" height="1"/><rect x="970" y="200" width="3" height="1"/><rect x="238" y="244" width="3" height="1"/><rect x="252" y="244" width="1" height="1"/><rect x="266" y="244" width="1" height="1"/><rect x="281" y="244" width="1" height="1"/><rect x="296" y="244" width="1" height="1"/><rect x="311" y="244" width="1" height="1"/><rect x="325" y="244" width="1" height="1"/><rect x="340" y="244" width="1" height="1"/><rect x="355" y="244" width="1" height="1"/><rect x="370" y="244" width="1" height="1"/><rect x="384" y="244" width="1" height="1"/><rect x="399" y="244" width="1" height="1"/><rect x="414" y="244" width="1" height="1"/><rect x="429" y="244" width="1" height="1"/><rect x="443" y="244" width="1" height="1"/><rect x="458" y="244" width="1" height="1"/><rect x="473" y="244" width="1" height="1"/><rect x="488" y="244" width="1" height="1"/><rect x="502" y="244" width="1" height="1"/><rect x="517" y="244" width="1" height="1"/><rect x="532" y="244" width="1" height="1"/><rect x="547" y="244" width="1" height="1"/><rect x="561" y="244" width="1" height="1"/><rect x="576" y="244" width="1" height="1"/><rect x="591" y="244" width="1" height="1"/><rect x="606" y="244" width="1" height="1"/><rect x="620" y="244" width="1" height="1"/><rect x="635" y="244" width="1" height="1"/><rect x="650" y="244" width="1" height="1"/><rect x="664" y="244" width="1" height="1"/><rect x="679" y="244" width="1" height="1"/><rect x="694" y="244" width="1" height="1"/><rect x="709" y="244" width="1" height="1"/><rect x="723" y="244" width="1" height="1"/><rect x="738" y="244" width="1" height="1"/><rect x="753" y="244" width="1" height="1"/><rect x="768" y="244" width="1" height="1"/><rect x="782" y="244" width="1" height="1"/><rect x="797" y="244" width="1" height="1"/><rect x="812" y="244" width="1" height="1"/><rect x="827" y="244" width="1" height="1"/><rect x="841" y="244" width="1" height="1"/><rect x="856" y="244" width="1" height="1"/><rect x="871" y="244" width="1" height="1"/><rect x="886" y="244" width="1" height="1"/><rect x="900" y="244" width="1" height="1"/><rect x="915" y="244" width="1" height="1"/><rect x="930" y="244" width="1" height="1"/><rect x="945" y="244" width="1" height="1"/><rect x="959" y="244" width="1" height="1"/><rect x="970" y="244" width="3" height="1"/><rect x="238" y="288" width="3" height="1"/><rect x="252" y="288" width="1" height="1"/><rect x="266" y="288" width="1" height="1"/><rect x="281" y="288" width="1" height="1"/><rect x="296" y="288" width="1" height="1"/><rect x="311" y="288" width="1" height="1"/><rect x="325" y="288" width="1" height="1"/><rect x="340" y="288" width="1" height="1"/><rect x="355" y="288" width="1" height="1"/><rect x="370" y="288" width="1" height="1"/><rect x="384" y="288" width="1" height="1"/><rect x="399" y="288" width="1" height="1"/><rect x="414" y="288" width="1" height="1"/><rect x="429" y="288" width="1" height="1"/><rect x="443" y="288" width="1" height="1"/><rect x="458" y="288" width="1" height="1"/><rect x="473" y="288" width="1" height="1"/><rect x="488" y="288" width="1" height="1"/><rect x="502" y="288" width="1" height="1"/><rect x="517" y="288" width="1" height="1"/><rect x="532" y="288" width="1" height="1"/><rect x="547" y="288" width="1" height="1"/><rect x="561" y="288" width="1" height="1"/><rect x="576" y="288" width="1" height="1"/><rect x="591" y="288" width="1" height="1"/><rect x="606" y="288" width="1" height="1"/><rect x="620" y="288" width="1" height="1"/><rect x="635" y="288" width="1" height="1"/><rect x="650" y="288" width="1" height="1"/><rect x="664" y="288" width="1" height="1"/><rect x="679" y="288" width="1" height="1"/><rect x="694" y="288" width="1" height="1"/><rect x="709" y="288" width="1" height="1"/><rect x="723" y="288" width="1" height="1"/><rect x="738" y="288" width="1" height="1"/><rect x="753" y="288" width="1" height="1"/><rect x="768" y="288" width="1" height="1"/><rect x="782" y="288" width="1" height="1"/><rect x="797" y="288" width="1" height="1"/><rect x="812" y="288" width="1" height="1"/><rect x="827" y="288" width="1" height="1"/><rect x="841" y="288" width="1" height="1"/><rect x="856" y="288" width="1" height="1"/><rect x="871" y="288" width="1" height="1"/><rect x="886" y="288" width="1" height="1"/><rect x="900" y="288" width="1" height="1"/><rect x="915" y="288" width="1" height="1"/><rect x="930" y="288" width="1" height="1"/><rect x="945" y="288" width="1" height="1"/><rect x="959" y="288" width="1" height="1"/><rect x="970" y="288" width="3" height="1"/><rect x="238" y="376" width="3" height="1"/><rect x="252" y="376" width="1" height="1"/><rect x="266" y="376" width="1" height="1"/><rect x="281" y="376" width="1" height="1"/><rect x="296" y="376" width="1" height="1"/><rect x="311" y="376" width="1" height="1"/><rect x="325" y="376" width="1" height="1"/><rect x="340" y="376" width="1" height="1"/><rect x="355" y="376" width="1" height="1"/><rect x="370" y="376" width="1" height="1"/><rect x="384" y="376" width="1" height="1"/><rect x="399" y="376" width="1" height="1"/><rect x="414" y="376" width="1" height="1"/><rect x="429" y="376" width="1" height="1"/><rect x="443" y="376" width="1" height="1"/><rect x="458" y="376" width="1" height="1"/><rect x="473" y="376" width="1" height="1"/><rect x="488" y="376" width="1" height="1"/><rect x="502" y="376" width="1" height="1"/><rect x="517" y="376" width="1" height="1"/><rect x="532" y="376" width="1" height="1"/><rect x="547" y="376" width="1" height="1"/><rect x="561" y="376" width="1" height="1"/><rect x="576" y="376" width="1" height="1"/><rect x="591" y="376" width="1" height="1"/><rect x="606" y="376" width="1" height="1"/><rect x="620" y="376" width="1" height="1"/><rect x="635" y="376" width="1" height="1"/><rect x="650" y="376" width="1" height="1"/><rect x="664" y="376" width="1" height="1"/><rect x="679" y="376" width="1" height="1"/><rect x="694" y="376" width="1" height="1"/><rect x="709" y="376" width="1" height="1"/><rect x="723" y="376" width="1" height="1"/><rect x="738" y="376" width="1" height="1"/><rect x="753" y="376" width="1" height="1"/><rect x="768" y="376" width="1" height="1"/><rect x="782" y="376" width="1" height="1"/><rect x="797" y="376" width="1" height="1"/><rect x="812" y="376" width="1" height="1"/><rect x="827" y="376" width="1" height="1"/><rect x="841" y="376" width="1" height="1"/><rect x="856" y="376" width="1" height="1"/><rect x="871" y="376" width="1" height="1"/><rect x="886" y="376" width="1" height="1"/><rect x="900" y="376" width="1" height="1"/><rect x="915" y="376" width="1" height="1"/><rect x="930" y="376" width="1" height="1"/><rect x="945" y="376" width="1" height="1"/><rect x="959" y="376" width="1" height="1"/><rect x="970" y="376" width="3" height="1"/><rect x="238" y="420" width="3" height="1"/><rect x="252" y="420" width="1" height="1"/><rect x="266" y="420" width="1" height="1"/><rect x="281" y="420" width="1" height="1"/><rect x="296" y="420" width="1" height="1"/><rect x="311" y="420" width="1" height="1"/><rect x="325" y="420" width="1" height="1"/><rect x="340" y="420" width="1" height="1"/><rect x="355" y="420" width="1" height="1"/><rect x="370" y="420" width="1" height="1"/><rect x="384" y="420" width="1" height="1"/><rect x="399" y="420" width="1" height="1"/><rect x="414" y="420" width="1" height="1"/><rect x="429" y="420" width="1" height="1"/><rect x="443" y="420" width="1" height="1"/><rect x="458" y="420" width="1" height="1"/><rect x="473" y="420" width="1" height="1"/><rect x="488" y="420" width="1" height="1"/><rect x="502" y="420" width="1" height="1"/><rect x="517" y="420" width="1" height="1"/><rect x="532" y="420" width="1" height="1"/><rect x="547" y="420" width="1" height="1"/><rect x="561" y="420" width="1" height="1"/><rect x="576" y="420" width="1" height="1"/><rect x="591" y="420" width="1" height="1"/><rect x="606" y="420" width="1" height="1"/><rect x="620" y="420" width="1" height="1"/><rect x="635" y="420" width="1" height="1"/><rect x="650" y="420" width="1" height="1"/><rect x="664" y="420" width="1" height="1"/><rect x="679" y="420" width="1" height="1"/><rect x="694" y="420" width="1" height="1"/><rect x="709" y="420" width="1" height="1"/><rect x="723" y="420" width="1" height="1"/><rect x="738" y="420" width="1" height="1"/><rect x="753" y="420" width="1" height="1"/><rect x="768" y="420" width="1" height="1"/><rect x="782" y="420" width="1" height="1"/><rect x="797" y="420" width="1" height="1"/><rect x="812" y="420" width="1" height="1"/><rect x="827" y="420" width="1" height="1"/><rect x="841" y="420" width="1" height="1"/><rect x="856" y="420" width="1" height="1"/><rect x="871" y="420" width="1" height="1"/><rect x="886" y="420" width="1" height="1"/><rect x="900" y="420" width="1" height="1"/><rect x="915" y="420" width="1" height="1"/><rect x="930" y="420" width="1" height="1"/><rect x="945" y="420" width="1" height="1"/><rect x="959" y="420" width="1" height="1"/><rect x="970" y="420" width="3" height="1"/><rect x="238" y="463" width="3" height="1"/><rect x="252" y="463" width="1" height="1"/><rect x="266" y="463" width="1" height="1"/><rect x="281" y="463" width="1" height="1"/><rect x="296" y="463" width="1" height="1"/><rect x="311" y="463" width="1" height="1"/><rect x="325" y="463" width="1" height="1"/><rect x="340" y="463" width="1" height="1"/><rect x="355" y="463" width="1" height="1"/><rect x="370" y="463" width="1" height="1"/><rect x="384" y="463" width="1" height="1"/><rect x="399" y="463" width="1" height="1"/><rect x="414" y="463" width="1" height="1"/><rect x="429" y="463" width="1" height="1"/><rect x="443" y="463" width="1" height="1"/><rect x="458" y="463" width="1" height="1"/><rect x="473" y="463" width="1" height="1"/><rect x="488" y="463" width="1" height="1"/><rect x="502" y="463" width="1" height="1"/><rect x="517" y="463" width="1" height="1"/><rect x="532" y="463" width="1" height="1"/><rect x="547" y="463" width="1" height="1"/><rect x="561" y="463" width="1" height="1"/><rect x="576" y="463" width="1" height="1"/><rect x="591" y="463" width="1" height="1"/><rect x="606" y="463" width="1" height="1"/><rect x="620" y="463" width="1" height="1"/><rect x="635" y="463" width="1" height="1"/><rect x="650" y="463" width="1" height="1"/><rect x="664" y="463" width="1" height="1"/><rect x="679" y="463" width="1" height="1"/><rect x="694" y="463" width="1" height="1"/><rect x="709" y="463" width="1" height="1"/><rect x="723" y="463" width="1" height="1"/><rect x="738" y="463" width="1" height="1"/><rect x="753" y="463" width="1" height="1"/><rect x="768" y="463" width="1" height="1"/><rect x="782" y="463" width="1" height="1"/><rect x="797" y="463" width="1" height="1"/><rect x="812" y="463" width="1" height="1"/><rect x="827" y="463" width="1" height="1"/><rect x="841" y="463" width="1" height="1"/><rect x="856" y="463" width="1" height="1"/><rect x="871" y="463" width="1" height="1"/><rect x="886" y="463" width="1" height="1"/><rect x="900" y="463" width="1" height="1"/><rect x="915" y="463" width="1" height="1"/><rect x="930" y="463" width="1" height="1"/><rect x="945" y="463" width="1" height="1"/><rect x="959" y="463" width="1" height="1"/><rect x="970" y="463" width="3" height="1"/><rect x="311" y="157" width="1" height="3"/><rect x="311" y="164" width="1" height="1"/><rect x="311" y="173" width="1" height="1"/><rect x="311" y="182" width="1" height="1"/><rect x="311" y="191" width="1" height="1"/><rect x="311" y="200" width="1" height="1"/><rect x="311" y="208" width="1" height="1"/><rect x="311" y="217" width="1" height="1"/><rect x="311" y="226" width="1" height="1"/><rect x="311" y="235" width="1" height="1"/><rect x="311" y="244" width="1" height="1"/><rect x="311" y="252" width="1" height="1"/><rect x="311" y="261" width="1" height="1"/><rect x="311" y="270" width="1" height="1"/><rect x="311" y="279" width="1" height="1"/><rect x="311" y="288" width="1" height="1"/><rect x="311" y="296" width="1" height="1"/><rect x="311" y="305" width="1" height="1"/><rect x="311" y="314" width="1" height="1"/><rect x="311" y="323" width="1" height="1"/><rect x="311" y="332" width="1" height="1"/><rect x="311" y="340" width="1" height="1"/><rect x="311" y="349" width="1" height="1"/><rect x="311" y="358" width="1" height="1"/><rect x="311" y="367" width="1" height="1"/><rect x="311" y="376" width="1" height="1"/><rect x="311" y="384" width="1" height="1"/><rect x="311" y="393" width="1" height="1"/><rect x="311" y="402" width="1" height="1"/><rect x="311" y="411" width="1" height="1"/><rect x="311" y="420" width="1" height="1"/><rect x="311" y="428" width="1" height="1"/><rect x="311" y="437" width="1" height="1"/><rect x="311" y="446" width="1" height="1"/><rect x="311" y="455" width="1" height="1"/><rect x="311" y="463" width="1" height="1"/><rect x="311" y="472" width="1" height="1"/><rect x="311" y="481" width="1" height="1"/><rect x="311" y="490" width="1" height="1"/><rect x="311" y="499" width="1" height="1"/><rect x="311" y="502" width="1" height="3"/><rect x="384" y="157" width="1" height="3"/><rect x="384" y="164" width="1" height="1"/><rect x="384" y="173" width="1" height="1"/><rect x="384" y="182" width="1" height="1"/><rect x="384" y="191" width="1" height="1"/><rect x="384" y="200" width="1" height="1"/><rect x="384" y="208" width="1" height="1"/><rect x="384" y="217" width="1" height="1"/><rect x="384" y="226" width="1" height="1"/><rect x="384" y="235" width="1" height="1"/><rect x="384" y="244" width="1" height="1"/><rect x="384" y="252" width="1" height="1"/><rect x="384" y="261" width="1" height="1"/><rect x="384" y="270" width="1" height="1"/><rect x="384" y="279" width="1" height="1"/><rect x="384" y="288" width="1" height="1"/><rect x="384" y="296" width="1" height="1"/><rect x="384" y="305" width="1" height="1"/><rect x="384" y="314" width="1" height="1"/><rect x="384" y="323" width="1" height="1"/><rect x="384" y="332" width="1" height="1"/><rect x="384" y="340" width="1" height="1"/><rect x="384" y="349" width="1" height="1"/><rect x="384" y="358" width="1" height="1"/><rect x="384" y="367" width="1" height="1"/><rect x="384" y="376" width="1" height="1"/><rect x="384" y="384" width="1" height="1"/><rect x="384" y="393" width="1" height="1"/><rect x="384" y="402" width="1" height="1"/><rect x="384" y="411" width="1" height="1"/><rect x="384" y="420" width="1" height="1"/><rect x="384" y="428" width="1" height="1"/><rect x="384" y="437" width="1" height="1"/><rect x="384" y="446" width="1" height="1"/><rect x="384" y="455" width="1" height="1"/><rect x="384" y="463" width="1" height="1"/><rect x="384" y="472" width="1" height="1"/><rect x="384" y="481" width="1" height="1"/><rect x="384" y="490" width="1" height="1"/><rect x="384" y="499" width="1" height="1"/><rect x="384" y="502" width="1" height="3"/><rect x="458" y="157" width="1" height="3"/><rect x="458" y="164" width="1" height="1"/><rect x="458" y="173" width="1" height="1"/><rect x="458" y="182" width="1" height="1"/><rect x="458" y="191" width="1" height="1"/><rect x="458" y="200" width="1" height="1"/><rect x="458" y="208" width="1" height="1"/><rect x="458" y="217" width="1" height="1"/><rect x="458" y="226" width="1" height="1"/><rect x="458" y="235" width="1" height="1"/><rect x="458" y="244" width="1" height="1"/><rect x="458" y="252" width="1" height="1"/><rect x="458" y="261" width="1" height="1"/><rect x="458" y="270" width="1" height="1"/><rect x="458" y="279" width="1" height="1"/><rect x="458" y="288" width="1" height="1"/><rect x="458" y="296" width="1" height="1"/><rect x="458" y="305" width="1" height="1"/><rect x="458" y="314" width="1" height="1"/><rect x="458" y="323" width="1" height="1"/><rect x="458" y="332" width="1" height="1"/><rect x="458" y="340" width="1" height="1"/><rect x="458" y="349" width="1" height="1"/><rect x="458" y="358" width="1" height="1"/><rect x="458" y="367" width="1" height="1"/><rect x="458" y="376" width="1" height="1"/><rect x="458" y="384" width="1" height="1"/><rect x="458" y="393" width="1" height="1"/><rect x="458" y="402" width="1" height="1"/><rect x="458" y="411" width="1" height="1"/><rect x="458" y="420" width="1" height="1"/><rect x="458" y="428" width="1" height="1"/><rect x="458" y="437" width="1" height="1"/><rect x="458" y="446" width="1" height="1"/><rect x="458" y="455" width="1" height="1"/><rect x="458" y="463" width="1" height="1"/><rect x="458" y="472" width="1" height="1"/><rect x="458" y="481" width="1" height="1"/><rect x="458" y="490" width="1" height="1"/><rect x="458" y="499" width="1" height="1"/><rect x="458" y="502" width="1" height="3"/><rect x="532" y="157" width="1" height="3"/><rect x="532" y="164" width="1" height="1"/><rect x="532" y="173" width="1" height="1"/><rect x="532" y="182" width="1" height="1"/><rect x="532" y="191" width="1" height="1"/><rect x="532" y="200" width="1" height="1"/><rect x="532" y="208" width="1" height="1"/><rect x="532" y="217" width="1" height="1"/><rect x="532" y="226" width="1" height="1"/><rect x="532" y="235" width="1" height="1"/><rect x="532" y="244" width="1" height="1"/><rect x="532" y="252" width="1" height="1"/><rect x="532" y="261" width="1" height="1"/><rect x="532" y="270" width="1" height="1"/><rect x="532" y="279" width="1" height="1"/><rect x="532" y="288" width="1" height="1"/><rect x="532" y="296" width="1" height="1"/><rect x="532" y="305" width="1" height="1"/><rect x="532" y="314" width="1" height="1"/><rect x="532" y="323" width="1" height="1"/><rect x="532" y="332" width="1" height="1"/><rect x="532" y="340" width="1" height="1"/><rect x="532" y="349" width="1" height="1"/><rect x="532" y="358" width="1" height="1"/><rect x="532" y="367" width="1" height="1"/><rect x="532" y="376" width="1" height="1"/><rect x="532" y="384" width="1" height="1"/><rect x="532" y="393" width="1" height="1"/><rect x="532" y="402" width="1" height="1"/><rect x="532" y="411" width="1" height="1"/><rect x="532" y="420" width="1" height="1"/><rect x="532" y="428" width="1" height="1"/><rect x="532" y="437" width="1" height="1"/><rect x="532" y="446" width="1" height="1"/><rect x="532" y="455" width="1" height="1"/><rect x="532" y="463" width="1" height="1"/><rect x="532" y="472" width="1" height="1"/><rect x="532" y="481" width="1" height="1"/><rect x="532" y="490" width="1" height="1"/><rect x="532" y="499" width="1" height="1"/><rect x="532" y="502" width="1" height="3"/><rect x="679" y="157" width="1" height="3"/><rect x="679" y="164" width="1" height="1"/><rect x="679" y="173" width="1" height="1"/><rect x="679" y="182" width="1" height="1"/><rect x="679" y="191" width="1" height="1"/><rect x="679" y="200" width="1" height="1"/><rect x="679" y="208" width="1" height="1"/><rect x="679" y="217" width="1" height="1"/><rect x="679" y="226" width="1" height="1"/><rect x="679" y="235" width="1" height="1"/><rect x="679" y="244" width="1" height="1"/><rect x="679" y="252" width="1" height="1"/><rect x="679" y="261" width="1" height="1"/><rect x="679" y="270" width="1" height="1"/><rect x="679" y="279" width="1" height="1"/><rect x="679" y="288" width="1" height="1"/><rect x="679" y="296" width="1" height="1"/><rect x="679" y="305" width="1" height="1"/><rect x="679" y="314" width="1" height="1"/><rect x="679" y="323" width="1" height="1"/><rect x="679" y="332" width="1" height="1"/><rect x="679" y="340" width="1" height="1"/><rect x="679" y="349" width="1" height="1"/><rect x="679" y="358" width="1" height="1"/><rect x="679" y="367" width="1" height="1"/><rect x="679" y="376" width="1" height="1"/><rect x="679" y="384" width="1" height="1"/><rect x="679" y="393" width="1" height="1"/><rect x="679" y="402" width="1" height="1"/><rect x="679" y="411" width="1" height="1"/><rect x="679" y="420" width="1" height="1"/><rect x="679" y="428" width="1" height="1"/><rect x="679" y="437" width="1" height="1"/><rect x="679" y="446" width="1" height="1"/><rect x="679" y="455" width="1" height="1"/><rect x="679" y="463" width="1" height="1"/><rect x="679" y="472" width="1" height="1"/><rect x="679" y="481" width="1" height="1"/><rect x="679" y="490" width="1" height="1"/><rect x="679" y="499" width="1" height="1"/><rect x="679" y="502" width="1" height="3"/><rect x="753" y="157" width="1" height="3"/><rect x="753" y="164" width="1" height="1"/><rect x="753" y="173" width="1" height="1"/><rect x="753" y="182" width="1" height="1"/><rect x="753" y="191" width="1" height="1"/><rect x="753" y="200" width="1" height="1"/><rect x="753" y="208" width="1" height="1"/><rect x="753" y="217" width="1" height="1"/><rect x="753" y="226" width="1" height="1"/><rect x="753" y="235" width="1" height="1"/><rect x="753" y="244" width="1" height="1"/><rect x="753" y="252" width="1" height="1"/><rect x="753" y="261" width="1" height="1"/><rect x="753" y="270" width="1" height="1"/><rect x="753" y="279" width="1" height="1"/><rect x="753" y="288" width="1" height="1"/><rect x="753" y="296" width="1" height="1"/><rect x="753" y="305" width="1" height="1"/><rect x="753" y="314" width="1" height="1"/><rect x="753" y="323" width="1" height="1"/><rect x="753" y="332" width="1" height="1"/><rect x="753" y="340" width="1" height="1"/><rect x="753" y="349" width="1" height="1"/><rect x="753" y="358" width="1" height="1"/><rect x="753" y="367" width="1" height="1"/><rect x="753" y="376" width="1" height="1"/><rect x="753" y="384" width="1" height="1"/><rect x="753" y="393" width="1" height="1"/><rect x="753" y="402" width="1" height="1"/><rect x="753" y="411" width="1" height="1"/><rect x="753" y="420" width="1" height="1"/><rect x="753" y="428" width="1" height="1"/><rect x="753" y="437" width="1" height="1"/><rect x="753" y="446" width="1" height="1"/><rect x="753" y="455" width="1" height="1"/><rect x="753" y="463" width="1" height="1"/><rect x="753" y="472" width="1" height="1"/><rect x="753" y="481" width="1" height="1"/><rect x="753" y="490" width="1" height="1"/><rect x="753" y="499" width="1" height="1"/><rect x="753" y="502" width="1" height="3"/><rect x="827" y="157" width="1" height="3"/><rect x="827" y="164" width="1" height="1"/><rect x="827" y="173" width="1" height="1"/><rect x="827" y="182" width="1" height="1"/><rect x="827" y="191" width="1" height="1"/><rect x="827" y="200" width="1" height="1"/><rect x="827" y="208" width="1" height="1"/><rect x="827" y="217" width="1" height="1"/><rect x="827" y="226" width="1" height="1"/><rect x="827" y="235" width="1" height="1"/><rect x="827" y="244" width="1" height="1"/><rect x="827" y="252" width="1" height="1"/><rect x="827" y="261" width="1" height="1"/><rect x="827" y="270" width="1" height="1"/><rect x="827" y="279" width="1" height="1"/><rect x="827" y="288" width="1" height="1"/><rect x="827" y="296" width="1" height="1"/><rect x="827" y="305" width="1" height="1"/><rect x="827" y="314" width="1" height="1"/><rect x="827" y="323" width="1" height="1"/><rect x="827" y="332" width="1" height="1"/><rect x="827" y="340" width="1" height="1"/><rect x="827" y="349" width="1" height="1"/><rect x="827" y="358" width="1" height="1"/><rect x="827" y="367" width="1" height="1"/><rect x="827" y="376" width="1" height="1"/><rect x="827" y="384" width="1" height="1"/><rect x="827" y="393" width="1" height="1"/><rect x="827" y="402" width="1" height="1"/><rect x="827" y="411" width="1" height="1"/><rect x="827" y="420" width="1" height="1"/><rect x="827" y="428" width="1" height="1"/><rect x="827" y="437" width="1" height="1"/><rect x="827" y="446" width="1" height="1"/><rect x="827" y="455" width="1" height="1"/><rect x="827" y="463" width="1" height="1"/><rect x="827" y="472" width="1" height="1"/><rect x="827" y="481" width="1" height="1"/><rect x="827" y="490" width="1" height="1"/><rect x="827" y="499" width="1" height="1"/><rect x="827" y="502" width="1" height="3"/><rect x="900" y="157" width="1" height="3"/><rect x="900" y="164" width="1" height="1"/><rect x="900" y="173" width="1" height="1"/><rect x="900" y="182" width="1" height="1"/><rect x="900" y="191" width="1" height="1"/><rect x="900" y="200" width="1" height="1"/><rect x="900" y="208" width="1" height="1"/><rect x="900" y="217" width="1" height="1"/><rect x="900" y="226" width="1" height="1"/><rect x="900" y="235" width="1" height="1"/><rect x="900" y="244" width="1" height="1"/><rect x="900" y="252" width="1" height="1"/><rect x="900" y="261" width="1" height="1"/><rect x="900" y="270" width="1" height="1"/><rect x="900" y="279" width="1" height="1"/><rect x="900" y="288" width="1" height="1"/><rect x="900" y="296" width="1" height="1"/><rect x="900" y="305" width="1" height="1"/><rect x="900" y="314" width="1" height="1"/><rect x="900" y="323" width="1" height="1"/><rect x="900" y="332" width="1" height="1"/><rect x="900" y="340" width="1" height="1"/><rect x="900" y="349" width="1" height="1"/><rect x="900" y="358" width="1" height="1"/><rect x="900" y="367" width="1" height="1"/><rect x="900" y="376" width="1" height="1"/><rect x="900" y="384" width="1" height="1"/><rect x="900" y="393" width="1" height="1"/><rect x="900" y="402" width="1" height="1"/><rect x="900" y="411" width="1" height="1"/><rect x="900" y="420" width="1" height="1"/><rect x="900" y="428" width="1" height="1"/><rect x="900" y="437" width="1" height="1"/><rect x="900" y="446" width="1" height="1"/><rect x="900" y="455" width="1" height="1"/><rect x="900" y="463" width="1" height="1"/><rect x="900" y="472" width="1" height="1"/><rect x="900" y="481" width="1" height="1"/><rect x="900" y="490" width="1" height="1"/><rect x="900" y="499" width="1" height="1"/><rect x="900" y="502" width="1" height="3"/></g><g fill="#d2d2d2"><rect x="238" y="332" width="735" height="1"/><rect x="606" y="157" width="1" height="348"/><rect x="252" y="330" width="1" height="5"/><rect x="266" y="330" width="1" height="5"/><rect x="281" y="330" width="1" height="5"/><rect x="296" y="330" width="1" height="5"/><rect x="311" y="330" width="1" height="5"/><rect x="325" y="330" width="1" height="5"/><rect x="340" y="330" width="1" height="5"/><rect x="355" y="330" width="1" height="5"/><rect x="370" y="330" width="1" height="5"/><rect x="384" y="330" width="1" height="5"/><rect x="399" y="330" width="1" height="5"/><rect x="414" y="330" width="1" height="5"/><rect x="429" y="330" width="1" height="5"/><rect x="443" y="330" width="1" height="5"/><rect x="458" y="330" width="1" height="5"/><rect x="473" y="330" width="1" height="5"/><rect x="488" y="330" width="1" height="5"/><rect x="502" y="330" width="1" height="5"/><rect x="517" y="330" width="1" height="5"/><rect x="532" y="330" width="1" height="5"/><rect x="547" y="330" width="1" height="5"/><rect x="561" y="330" width="1" height="5"/><rect x="576" y="330" width="1" height="5"/><rect x="591" y="330" width="1" height="5"/><rect x="606" y="330" width="1" height="5"/><rect x="620" y="330" width="1" height="5"/><rect x="635" y="330" width="1" height="5"/><rect x="650" y="330" width="1" height="5"/><rect x="664" y="330" width="1" height="5"/><rect x="679" y="330" width="1" height="5"/><rect x="694" y="330" width="1" height="5"/><rect x="709" y="330" width="1" height="5"/><rect x="723" y="330" width="1" height="5"/><rect x="738" y="330" width="1" height="5"/><rect x="753" y="330" width="1" height="5"/><rect x="768" y="330" width="1" height="5"/><rect x="782" y="330" width="1" height="5"/><rect x="797" y="330" width="1" height="5"/><rect x="812" y="330" width="1" height="5"/><rect x="827" y="330" width="1" height="5"/><rect x="841" y="330" width="1" height="5"/><rect x="856" y="330" width="1" height="5"/><rect x="871" y="330" width="1" height="5"/><rect x="886" y="330" width="1" height="5"/><rect x="900" y="330" width="1" height="5"/><rect x="915" y="330" width="1" height="5"/><rect x="930" y="330" width="1" height="5"/><rect x="945" y="330" width="1" height="5"/><rect x="959" y="330" width="1" height="5"/><rect x="604" y="164" width="5" height="1"/><rect x="604" y="173" width="5" height="1"/><rect x="604" y="182" width="5" height="1"/><rect x="604" y="191" width="5" height="1"/><rect x="604" y="200" width="5" height="1"/><rect x="604" y="208" width="5" height="1"/><rect x="604" y="217" width="5" height="1"/><rect x="604" y="226" width="5" height="1"/><rect x="604" y="235" width="5" height="1"/><rect x="604" y="244" width="5" height="1"/><rect x="604" y="252" width="5" height="1"/><rect x="604" y="261" width="5" height="1"/><rect x="604" y="270" width="5" height="1"/><rect x="604" y="279" width="5" height="1"/><rect x="604" y="288" width="5" height="1"/><rect x="604" y="296" width="5" height="1"/><rect x="604" y="305" width="5" height="1"/><rect x="604" y="314" width="5" height="1"/><rect x="604" y="323" width="5" height="1"/><rect x="604" y="332" width="5" height="1"/><rect x="604" y="340" width="5" height="1"/><rect x="604" y="349" width="5" height="1"/><rect x="604" y="358" width="5" height="1"/><rect x="604" y="367" width="5" height="1"/><rect x="604" y="376" width="5" height="1"/><rect x="604" y="384" width="5" height="1"/><rect x="604" y="393" width="5" height="1"/><rect x="604" y="402" width="5" height="1"/><rect x="604" y="411" width="5" height="1"/><rect x="604" y="420" width="5" height="1"/><rect x="604" y="428" width="5" height="1"/><rect x="604" y="437" width="5" height="1"/><rect x="604" y="446" width="5" height="1"/><rect x="604" y="455" width="5" height="1"/><rect x="604" y="463" width="5" height="1"/><rect x="604" y="472" width="5" height="1"/><rect x="604" y="481" width="5" height="1"/><rect x="604" y="490" width="5" height="1"/><rect x="604" y="499" width="5" height="1"/></g><polyline points="238.5,421.5 242,420.5 245.5,420.5 246,421.5 252.5,421.5 253.5,423.5 261,423.5 262,424.5 268,424.5 269,425.5 272,425.5 273,424.5 279,424.5 280,423.5 284.5,423.5 285.5,421.5 295,421.5 296,420.5 298,420.5 299,421.5 305.5,421.5 306.5,423.5 315,423.5 316,424.5 333,424.5 334,423.5 342,423.5 343.5,424.5 345.5,425.5 347,430 348.5,434 350,441 351.5,446 352.5,454.5 357.5,454.5 358,449 359,432 360,406 361,388 362,383.5 636,383.5 637,382.5 639.5,382.5 640.5,383.5 647,383.5 648,382.5 648.5,383.5 805.5,383.5 806.5,386 807,400 808,430 809,452 809.5,456.5 811,456.5 811,454.5 818.5,454.5 819.5,456.5 860,456.5 861.5,454.5 862.5,456.5 864,454.5 867.5,454.5 868.5,456.5 869,454.5 905,454.5 907,453.5 909,451.5 912.5,450 915,447 918,446 921,443 924,441 927.5,438 929,436.5 932,435.5 937,435.5 938,434.5 946,434.5 947.5,432.5 960,432.5 961,431.5 964,431.5 965.5,429.5 969.5,429.5 970.5,428.5 973,428.5" fill="none" stroke="#00f000" stroke-width="1"/><polyline points="238,279.5 251,279.5 251.5,278.5 252.5,278.5 253,279.5 256,279.5 256.5,278.5 257.5,278.5 258,279.5 262,279.5 262.5,278.5 263.5,278.5 264,279.5 268,279.5 268.5,278.5 269.5,278.5 270,279.5 277,279.5 277.5,278.5 278.5,278.5 279,279.5 287,279.5 287.5,278.5 288.5,278.5 289,279.5 308,279.5 308.5,278.5 309.5,278.5 310,279.5 337,279.5 337.5,278.5 338.5,278.5 339,279.5 350,279.5 351.5,281.5 353,279.5 354.5,279.5 356,281.5 357.5,280 357.5,250 358.5,250 358.5,226 360,222 361,219 362,217.5 364,216.5 367,216 369,215.5 396,215.5 397,212.5 398.2,212.5 399,215.5 401,215.5 401.8,212.5 402.7,212.5 403.5,215.5 404.5,215.5 405.3,212.5 405.2,212.5 406,215.5 409,215.5 409.8,212.5 410.7,212.5 411.5,215.5 412.5,215.5 413.3,212.5 414.2,212.5 415,215.5 416.5,215.5 417.3,212.5 418.2,212.5 419,215.5 422,215.5 422.8,212.5 423.2,212.5 424,215.5 427,215.5 427.8,212.5 429.2,212.5 430,215.5 431.5,215.5 432.3,212.5 432.2,212.5 433,215.5 434,215.5 434.8,212.5 439.2,212.5 440,215.5 441,215.5 441.8,212.5 444.2,212.5 445,215.5 446,215.5 446.8,212.5 447.2,212.5 448,215.5 449,215.5 449.8,212.5 451.2,212.5 452,215.5 453.5,215.5 454.3,212.5 457.7,212.5 458.5,215.5 459.5,215.5 460.3,212.5 461.2,212.5 462,215.5 463,215.5 463.8,212.5 466.2,212.5 467,215.5 468.5,215.5 469.3,212.5 473.2,212.5 474,215.5 475,215.5 475.8,212.5 480.2,212.5 481,215.5 482,215.5 482.8,212.5 490.2,212.5 491,215.5 492,215.5 492.8,212.5 635,212.5 636,214.5 637,212.5 694,212.5 694.5,211.5 695.5,211.5 696,212.5 700,212.5 700.5,211.5 701.5,211.5 702,212.5 707,212.5 707.5,211.5 708.5,211.5 709,212.5 716,212.5 716.5,211.5 717.5,211.5 718,212.5 721,212.5 721.5,211.5 722.5,211.5 723,212.5 726,212.5 726.5,211.5 727.5,211.5 728,212.5 735,212.5 735.5,211.5 736.5,211.5 737,212.5 742,212.5 742.5,211.5 743.5,211.5 744,212.5 748,212.5 748.5,211.5 749.5,211.5 750,212.5 754,212.5 754.5,211.5 755.5,211.5 756,212.5 763,212.5 763.5,211.5 764.5,211.5 765,212.5 772,212.5 772.5,211.5 773.5,211.5 774,212.5 781,212.5 781.5,211.5 782.5,211.5 783,212.5 787,212.5 787.5,211.5 788.5,211.5 789,212.5 793,212.5 793.5,211.5 794.5,211.5 795,212.5 798,212.5 799.5,213.5 800.5,216 801.5,220 802.5,226 802.5,277 803.5,277 803.5,332 805,340 807,350 809,356 811,359.5 812.5,361.5 817.5,361.5 817.5,353 820,345 823.5,332 826,320 828.5,308 829.5,300 831,292 833,287.5 836,284.5 840,283.5 842,281.5 847,280.5 848.5,278.5 850,279.5 860,279.5 861,278.5 871,278.5 871.5,277.5 872.5,277.5 873,278.5 877,278.5 877.5,277.5 878.5,277.5 879,278.5 888,278.5 888.5,277.5 889.5,277.5 890,278.5 896,278.5 896.5,277.5 897.5,277.5 898,278.5 907,278.5 907.5,277.5 908.5,277.5 909,278.5 913,278.5 913.5,277.5 914.5,277.5 915,278.5 924,278.5 924.5,277.5 925.5,277.5 926,278.5 930,278.5 930.5,277.5 931.5,277.5 932,278.5 936,278.5 936.5,277.5 937.5,277.5 938,278.5 942,278.5 943,276.5 944,278.5 973,278.5" fill="none" stroke="#ffff00" stroke-width="1"/></svg>
<svg style="left:217px;top:270px" width="20" height="165" viewBox="217 270 20 165"><path d="M217.700 275 h12.300 l5.200 5.500 l-5.200 5.500 h-12.300z" fill="#ff0"/><path d="M217.700 417 h12.300 l5.200 5.500 l-5.200 5.500 h-12.300z" fill="#0e0"/></svg>
<span class="t" style="left:222.5px;top:275.5px;font-size:12px;line-height:13px;color:#000;-webkit-text-stroke:.7px #000;">1</span>
<span class="t" style="left:222.5px;top:417.5px;font-size:12px;line-height:13px;color:#000;-webkit-text-stroke:.7px #000;">2</span>
<svg style="left:976px;top:204px" width="20" height="16" viewBox="976 204 20 16"><path d="M977 211.500 l5 -5.500 h12.500 v11 h-12.500z" fill="#ff0"/></svg>
<span class="t" style="left:984.5px;top:205.5px;font-size:11px;line-height:12px;color:#5a5a00;">T</span>
<div style="left:237px;top:511px;width:92px;height:19px;background:#000;"></div>
<span class="t" style="left:239px;top:513px;font-size:13px;line-height:15px;color:#ff0;transform:scaleX(0.9417);">CH1</span>
<svg style="left:266px;top:517px" width="12" height="8" shape-rendering="crispEdges"><path d="M1 2.500 h2 M5 2.500 h2 M9 2.500 h2 M1 6.500 h10" stroke="#ff0" stroke-width="1"/></svg>
<span class="t" style="left:287px;top:513px;font-size:13px;line-height:15px;color:#ff0;transform:scaleX(0.9587);">500mV</span>
<div style="left:377px;top:511px;width:92px;height:19px;background:#000;"></div>
<span class="t" style="left:379px;top:513px;font-size:13px;line-height:15px;color:#0e0;transform:scaleX(0.9417);">CH2</span>
<svg style="left:406px;top:517px" width="12" height="8" shape-rendering="crispEdges"><path d="M1 2.500 h2 M5 2.500 h2 M9 2.500 h2 M1 6.500 h10" stroke="#0e0" stroke-width="1"/></svg>
<span class="t" style="left:427px;top:513px;font-size:13px;line-height:15px;color:#0e0;transform:scaleX(0.9122);">5.00V</span>
<div style="left:765px;top:511px;width:209px;height:19px;background:#000;"></div>
<span class="t" style="left:766.5px;top:513px;font-size:13px;line-height:15px;color:#ff8c00;transform:scaleX(0.9523);">Time: 20.00us</span>
<span class="t" style="left:863.5px;top:513px;font-size:13px;line-height:15px;color:#ff8c00;transform:scaleX(0.9283);">Sample Rate: 4MHz</span>
<!-- p_right -->
<div style="left:1005px;top:80px;width:275px;height:460px;overflow:hidden;background:#f6f1f5">
<div style="left:-1005px;top:-80px;width:1280px;height:800px">
<div style="left:1005px;top:80px;width:275px;height:20px;background:linear-gradient(#b9cde6,#cbdbee 45%,#dce7f4);"></div>
<span class="t" style="left:1009px;top:82px;font-size:12px;line-height:16px;color:#4d5b70;transform:scaleX(0.9903);">Control Panel</span>
<svg style="left:1248px;top:84px" width="12" height="12"><path d="M3.500 2.500 h4.500 v4.500 h-4.500z M2 7.500 h8 M5.800 8 v3" stroke="#111" stroke-width="1.100" fill="none"/><rect x="6.500" y="2" width="2" height="5.500" fill="#111"/></svg>
<svg style="left:1266px;top:85px" width="9" height="9"><path d="M1 1 L8 8 M8 1 L1 8" stroke="#111" stroke-width="1.700" fill="none"/></svg>
<div style="left:1005px;top:100px;width:275px;height:23px;background:linear-gradient(#f3f3f3,#ebebeb 48%,#dcdcdc 52%,#d0d0d0);border:1px solid #8a8a8f;border-radius:3px;box-sizing:border-box;box-shadow:inset 0 0 0 1px rgba(255,255,255,.7)"></div>
<svg style="left:1267px;top:110px" width="9" height="5"><path d="M0 0 h8 l-4 4.500z" fill="#111"/></svg>
<span class="t" style="left:1009px;top:104px;font-size:12px;line-height:16px;color:#000;transform:scaleX(0.9407);">Scope</span>
<div style="left:1005px;top:123px;width:275px;height:24px;background:linear-gradient(#f7f7fc,#ececf6 35%,#cfd1e5 70%,#a9add0);"></div>
<div style="left:1010px;top:159px;width:203px;height:118px;background:transparent;border:1px solid #d4dde6;border-radius:4px;box-sizing:border-box"></div>
<div style="left:1085px;top:157px;width:54.5px;height:5px;background:#f6f1f5;"></div>
<span class="t" style="left:1088px;top:152.5px;font-size:12px;line-height:15px;color:#000;transform:scaleX(0.8976);">Horizontal</span>
<span class="t" style="left:1020px;top:173px;font-size:12px;line-height:15px;color:#000;transform:scaleX(0.8373);">Time/DIV</span>
<div style="left:1019px;top:191px;width:74px;height:22px;background:linear-gradient(#f4f4f4,#ececec 48%,#dedede 52%,#d0d0d0);border:1px solid #76767a;border-radius:3px;box-sizing:border-box;box-shadow:inset 0 0 0 1px rgba(255,255,255,.75)"></div>
<span class="t" style="left:1022.5px;top:195px;font-size:12px;line-height:15px;color:#000;transform:scaleX(0.9136);">20.00us</span>
<svg style="left:1080px;top:200px" width="8" height="5"><path d="M0 0 h7 l-3.500 4z" fill="#111"/></svg>
<span class="t" style="left:1020px;top:223px;font-size:12px;line-height:15px;color:#000;transform:scaleX(0.8684);">Format</span>
<div style="left:1019px;top:243px;width:74px;height:22px;background:linear-gradient(#f4f4f4,#ececec 48%,#dedede 52%,#d0d0d0);border:1px solid #76767a;border-radius:3px;box-sizing:border-box;box-shadow:inset 0 0 0 1px rgba(255,255,255,.75)"></div>
<span class="t" style="left:1022.5px;top:247px;font-size:12px;line-height:15px;color:#000;transform:scaleX(0.9049);">Y-T</span>
<svg style="left:1080px;top:252px" width="8" height="5"><path d="M0 0 h7 l-3.500 4z" fill="#111"/></svg>
<svg style="left:1111.5px;top:181px" width="84" height="84" viewBox="-42 -42 84 84"><path d="M-24 25 L-31.500 32 M24 25 L31.500 32" stroke="#111" stroke-width="1.400"/><circle r="37" fill="#fff" stroke="#111" stroke-width="1.100"/><circle r="34.500" fill="#d0d0d0" stroke="#111" stroke-width="1.100"/><path d="M24.39 -24.39 A34.500 34.500 0 0 1 -24.39 24.39 Z" fill="#b4b4b4"/><circle r="34.500" fill="none" stroke="#111" stroke-width="1.100"/><circle r="28" fill="#0000d0" stroke="#111" stroke-width="1.100"/><path d="M4.2 -2.6 L18.7 -11.7" stroke="#ffffc0" stroke-width="1.800" stroke-linecap="round"/></svg>
<div style="left:1010px;top:296px;width:203px;height:300px;background:transparent;border:1px solid #d4dde6;border-radius:4px;box-sizing:border-box"></div>
<div style="left:1091.5px;top:294px;width:42.5px;height:5px;background:#f6f1f5;"></div>
<span class="t" style="left:1094.5px;top:289.5px;font-size:12px;line-height:15px;color:#000;transform:scaleX(0.9274);">Vertical</span>
<svg style="left:1019px;top:314px" width="13" height="13"><rect x=".5" y=".5" width="12" height="12" fill="#f4f4f4" stroke="#8e8f8f"/><rect x="2.500" y="2.500" width="8" height="8" fill="#e4e5e6" stroke="#c4c5c6"/><path d="M3.300 6.200 l2 3 l3.600 -7" fill="none" stroke="#3b4f8c" stroke-width="1.800"/></svg>
<span class="t" style="left:1035.5px;top:313px;font-size:12px;line-height:15px;color:#000;transform:scaleX(0.8120);">CH1</span>
<div style="left:1019px;top:335px;width:74px;height:22px;background:linear-gradient(#f4f4f4,#ececec 48%,#dedede 52%,#d0d0d0);border:1px solid #76767a;border-radius:3px;box-sizing:border-box;box-shadow:inset 0 0 0 1px rgba(255,255,255,.75)"></div>
<span class="t" style="left:1022.5px;top:339px;font-size:12px;line-height:15px;color:#000;transform:scaleX(0.8812);">500mV</span>
<svg style="left:1080px;top:344px" width="8" height="5"><path d="M0 0 h7 l-3.500 4z" fill="#111"/></svg>
<div style="left:1019px;top:370px;width:74px;height:22px;background:#f4f4f4;border:1px solid #c4c4c8;border-radius:3px;box-sizing:border-box"></div>
<span class="t" style="left:1022.5px;top:374px;font-size:12px;line-height:15px;color:#9a9a9a;transform:scaleX(0.8072);">DC</span>
<svg style="left:1080px;top:379px" width="8" height="5"><path d="M0 0 h7 l-3.500 4z" fill="#a8a8a8"/></svg>
<div style="left:1019px;top:404px;width:74px;height:22px;background:linear-gradient(#f4f4f4,#ececec 48%,#dedede 52%,#d0d0d0);border:1px solid #76767a;border-radius:3px;box-sizing:border-box;box-shadow:inset 0 0 0 1px rgba(255,255,255,.75)"></div>
<span class="t" style="left:1022.5px;top:408px;font-size:12px;line-height:15px;color:#000;transform:scaleX(0.7891);">x1</span>
<svg style="left:1080px;top:413px" width="8" height="5"><path d="M0 0 h7 l-3.500 4z" fill="#111"/></svg>
<svg style="left:1130px;top:411px" width="13" height="13"><rect x=".5" y=".5" width="12" height="12" fill="#f4f4f4" stroke="#8e8f8f"/><rect x="2.500" y="2.500" width="8" height="8" fill="#e4e5e6" stroke="#c4c5c6"/></svg>
<span class="t" style="left:1146px;top:411px;font-size:12px;line-height:15px;color:#000;transform:scaleX(0.9000);">Invert</span>
<svg style="left:1111.5px;top:317px" width="84" height="84" viewBox="-42 -42 84 84"><path d="M-24 25 L-31.500 32 M24 25 L31.500 32" stroke="#111" stroke-width="1.400"/><circle r="37" fill="#fff" stroke="#111" stroke-width="1.100"/><circle r="34.500" fill="#d0d0d0" stroke="#111" stroke-width="1.100"/><path d="M24.39 -24.39 A34.500 34.500 0 0 1 -24.39 24.39 Z" fill="#b4b4b4"/><circle r="34.500" fill="none" stroke="#111" stroke-width="1.100"/><circle r="28" fill="#ffff00" stroke="#111" stroke-width="1.100"/><path d="M-1.0 -4.9 L-4.6 -21.5" stroke="#ffffc0" stroke-width="1.800" stroke-linecap="round"/></svg>
<svg style="left:1019px;top:454px" width="13" height="13"><rect x=".5" y=".5" width="12" height="12" fill="#f4f4f4" stroke="#8e8f8f"/><rect x="2.500" y="2.500" width="8" height="8" fill="#e4e5e6" stroke="#c4c5c6"/><path d="M3.300 6.200 l2 3 l3.600 -7" fill="none" stroke="#3b4f8c" stroke-width="1.800"/></svg>
<span class="t" style="left:1035.5px;top:453px;font-size:12px;line-height:15px;color:#000;transform:scaleX(0.8120);">CH2</span>
<div style="left:1019px;top:475px;width:74px;height:22px;background:linear-gradient(#f4f4f4,#ececec 48%,#dedede 52%,#d0d0d0);border:1px solid #76767a;border-radius:3px;box-sizing:border-box;box-shadow:inset 0 0 0 1px rgba(255,255,255,.75)"></div>
<span class="t" style="left:1022.5px;top:479px;font-size:12px;line-height:15px;color:#000;transform:scaleX(0.9252);">5.00V</span>
<svg style="left:1080px;top:484px" width="8" height="5"><path d="M0 0 h7 l-3.500 4z" fill="#111"/></svg>
<div style="left:1019px;top:510px;width:74px;height:22px;background:#f4f4f4;border:1px solid #c4c4c8;border-radius:3px;box-sizing:border-box"></div>
<span class="t" style="left:1022.5px;top:514px;font-size:12px;line-height:15px;color:#9a9a9a;transform:scaleX(0.8072);">DC</span>
<svg style="left:1080px;top:519px" width="8" height="5"><path d="M0 0 h7 l-3.500 4z" fill="#a8a8a8"/></svg>
<svg style="left:1111.5px;top:458.5px" width="84" height="84" viewBox="-42 -42 84 84"><path d="M-24 25 L-31.500 32 M24 25 L31.500 32" stroke="#111" stroke-width="1.400"/><circle r="37" fill="#fff" stroke="#111" stroke-width="1.100"/><circle r="34.500" fill="#d0d0d0" stroke="#111" stroke-width="1.100"/><path d="M24.39 -24.39 A34.500 34.500 0 0 1 -24.39 24.39 Z" fill="#b4b4b4"/><circle r="34.500" fill="none" stroke="#111" stroke-width="1.100"/><circle r="28" fill="#00f020" stroke="#111" stroke-width="1.100"/><path d="M-4.0 3.0 L-17.6 13.2" stroke="#ffffc0" stroke-width="1.800" stroke-linecap="round"/></svg>
<div style="left:1263px;top:147px;width:17px;height:393px;background:#f0edf0;"></div>
<div style="left:1264px;top:165px;width:16px;height:178px;background:linear-gradient(90deg,#f2f2f2,#e4e4e6 45%,#cfcfd2 55%,#dadadc);border:1px solid #979797;border-radius:2px;box-sizing:border-box"></div>
<svg style="left:1263px;top:147px" width="17" height="393" viewBox="1263 147 17 393"><path d="M1268.500 156.500 l3.500 -3.500 l3.500 3.500z" fill="#444"/><path d="M1268.500 529.500 l3.500 3.500 l3.500 -3.500z" fill="#444"/><path d="M1268 250.500 h8 M1268 253.500 h8 M1268 256.500 h8" stroke="#8a8a8a" stroke-width="1"/></svg>
</div></div>
<!-- p_output -->
<div style="left:211px;top:539px;width:1069px;height:19px;background:linear-gradient(#b4c8e1,#c8d9ed 45%,#dbe6f3);"></div>
<span class="t" style="left:214.5px;top:541px;font-size:12px;line-height:16px;color:#4d5b70;transform:scaleX(1.0417);">Output</span>
<svg style="left:1266px;top:544px" width="9" height="9"><path d="M1 1 L8 8 M8 1 L1 8" stroke="#111" stroke-width="1.700" fill="none"/></svg>
<div style="left:211px;top:558px;width:1069px;height:182px;background:#fff;"></div>
<div style="left:211px;top:558px;width:1069px;height:19px;background:#f6f1f5;"></div>
<div style="left:211px;top:577px;width:18px;height:58px;background:#f6f1f5;"></div>
<svg style="left:215px;top:563px" width="10" height="10"><rect x=".5" y=".5" width="8" height="8" fill="#fcfcfc" stroke="#8a90a0"/><rect x="2" y="4" width="5" height="1" fill="#3a4a9a"/></svg>
<span class="t" style="left:233px;top:560px;font-size:12px;line-height:16px;color:#6d6d6d;font-weight:bold;transform:scaleX(0.9369);">CH1</span>
<span class="t" style="left:233px;top:579px;font-size:12px;line-height:16px;color:#000;transform:scaleX(1.0285);">Maximum</span>
<span class="t" style="left:347.5px;top:579px;font-size:12px;line-height:16px;color:#000;transform:scaleX(0.9252);">1.29V</span>
<div style="left:229px;top:596px;width:1051px;height:1px;background:#f3edf1;"></div>
<span class="t" style="left:233px;top:598px;font-size:12px;line-height:16px;color:#000;transform:scaleX(1.0783);">Minimum</span>
<span class="t" style="left:347.5px;top:598px;font-size:12px;line-height:16px;color:#000;transform:scaleX(0.9996);">-925mV</span>
<div style="left:229px;top:615px;width:1051px;height:1px;background:#f3edf1;"></div>
<span class="t" style="left:233px;top:617px;font-size:12px;line-height:16px;color:#000;transform:scaleX(0.9884);">+ Pulse Width</span>
<span class="t" style="left:347.5px;top:617px;font-size:12px;line-height:16px;color:#000;transform:scaleX(0.9081);">120uS</span>
<div style="left:229px;top:634px;width:1051px;height:1px;background:#f3edf1;"></div>
<div style="left:343px;top:577px;width:1px;height:162px;background:#f3edf1;"></div>
<div style="left:0px;top:739px;width:1280px;height:1px;background:#8c8c8c;"></div>
<div style="left:0px;top:740px;width:1280px;height:20px;background:#f6efef;"></div>
<span class="t" style="left:4px;top:743px;font-size:12px;line-height:16px;color:#000;transform:scaleX(0.9874);">Running...</span>
<span class="t" style="left:1176px;top:743px;font-size:12px;line-height:16px;color:#000;transform:scaleX(0.9369);">26-02-2016</span>
<span class="t" style="left:1240px;top:743px;font-size:12px;line-height:16px;color:#000;transform:scaleX(0.8995);">20:08</span>
<!-- p_taskbar -->
<div style="left:0px;top:760px;width:1280px;height:40px;background:#a6c1e0;"></div>
<div style="left:0px;top:760px;width:75px;height:40px;background:#8497b5;"></div>
<div style="left:970px;top:760px;width:60px;height:40px;background:linear-gradient(90deg,#a6c1e0,#8a9ebc);"></div>
<div style="left:1012px;top:761px;width:268px;height:39px;background:#8497b5;border-radius:14px 0 0 0;border-top:1px solid #9fb2cc;border-left:1px solid #9fb2cc;box-sizing:border-box"></div>
<div style="left:0px;top:759.3px;width:1280px;height:1.5px;background:#3f4d64;"></div>
<div style="left:0px;top:761px;width:75px;height:1px;background:#a3b6d2;"></div>
<div style="left:75.8px;top:760.7px;width:59.2px;height:38.6px;background:linear-gradient(160deg,#c3d6ec,#b0c8e4 50%,#a6c0df);border:1px solid #4e5f7b;border-radius:3px;box-sizing:border-box;box-shadow:inset 0 0 0 1px rgba(255,255,255,.6)"></div>
<div style="left:137.8px;top:760.7px;width:59.2px;height:38.6px;background:linear-gradient(160deg,#c3d6ec,#b0c8e4 50%,#a6c0df);border:1px solid #4e5f7b;border-radius:3px;box-sizing:border-box;box-shadow:inset 0 0 0 1px rgba(255,255,255,.6)"></div>
<div style="left:199.8px;top:760.7px;width:59.2px;height:38.6px;background:linear-gradient(160deg,#c3d6ec,#b0c8e4 50%,#a6c0df);border:1px solid #4e5f7b;border-radius:3px;box-sizing:border-box;box-shadow:inset 0 0 0 1px rgba(255,255,255,.6)"></div>
<div style="left:261.8px;top:760.7px;width:59.2px;height:38.6px;background:linear-gradient(160deg,#e4eef8,#d6e3f3 50%,#c8daef);border:1px solid #4e5f7b;border-radius:3px;box-sizing:border-box;box-shadow:inset 0 0 0 1px rgba(255,255,255,.6)"></div>
<div style="left:323.8px;top:760.7px;width:59.2px;height:38.6px;background:linear-gradient(160deg,#c3d6ec,#b0c8e4 50%,#a6c0df);border:1px solid #4e5f7b;border-radius:3px;box-sizing:border-box;box-shadow:inset 0 0 0 1px rgba(255,255,255,.6)"></div>
<div style="left:385.8px;top:760.7px;width:54.2px;height:38.6px;background:linear-gradient(160deg,#c3d6ec,#b0c8e4 50%,#a6c0df);border:1px solid #4e5f7b;border-radius:3px;box-sizing:border-box;box-shadow:inset 0 0 0 1px rgba(255,255,255,.6)"></div>
<div style="left:441.8px;top:761px;width:2.4px;height:38.5px;background:#5e718f;border-radius:2px"></div>
<svg style="left:5px;top:760px" width="44" height="40" viewBox="5 760 44 40">
<defs><linearGradient id="orb" x1="0" y1="0" x2="0" y2="1"><stop offset="0" stop-color="#a9bdd4"/><stop offset=".42" stop-color="#5d82aa"/><stop offset=".46" stop-color="#0d4f8e"/><stop offset=".75" stop-color="#0a64ae"/><stop offset="1" stop-color="#08c4f8"/></linearGradient>
<radialGradient id="orbglow" cx=".5" cy="1" r=".5"><stop offset="0" stop-color="#10e0ff" stop-opacity=".9"/><stop offset="1" stop-color="#10e0ff" stop-opacity="0"/></radialGradient></defs>
<circle cx="27" cy="779.800" r="18" fill="url(#orb)" stroke="#a9bcd6" stroke-width="1"/>
<circle cx="27" cy="779.800" r="17" fill="url(#orbglow)" stroke="#1a5088" stroke-width=".8"/>
<path d="M19.500 769.800 q4.500 -2 9 -.3 l-1.800 8.300 q-4 -1.800 -9 .5z" fill="#e8501c"/><path d="M20.500 775 q3.500 -1 6.500 0 l-.5 2.500 q-3.500 -1.500 -7.500 .5z" fill="#f8a020"/>
<path d="M29.800 771.800 q4.500 2 9.500 -.8 l-2 8.600 q-4.500 2.500 -9.300 .6z" fill="#78b830"/>
<path d="M17.200 779.800 q5 -2.300 9 -.5 l-1.700 8 q-4 -1.700 -9 .6z" fill="#2c8ce0"/>
<path d="M27.300 780.800 q4.500 2 9.300 -.6 l-1.900 8.200 q-4.500 2.500 -9.200 .6z" fill="#fcbc18"/>
</svg>
<svg style="left:57px;top:764px" width="12" height="34" shape-rendering="crispEdges"><rect x="1" y="1" width="2" height="2" fill="#4a5874"/><rect x="2" y="2" width="1" height="1" fill="#2c3850"/><rect x="4" y="1" width="2" height="2" fill="#4a5874"/><rect x="5" y="2" width="1" height="1" fill="#2c3850"/><rect x="7" y="1" width="2" height="2" fill="#4a5874"/><rect x="8" y="2" width="1" height="1" fill="#2c3850"/><rect x="1" y="5" width="2" height="2" fill="#4a5874"/><rect x="2" y="6" width="1" height="1" fill="#2c3850"/><rect x="4" y="5" width="2" height="2" fill="#4a5874"/><rect x="5" y="6" width="1" height="1" fill="#2c3850"/><rect x="7" y="5" width="2" height="2" fill="#4a5874"/><rect x="8" y="6" width="1" height="1" fill="#2c3850"/><rect x="1" y="9" width="2" height="2" fill="#4a5874"/><rect x="2" y="10" width="1" height="1" fill="#2c3850"/><rect x="4" y="9" width="2" height="2" fill="#4a5874"/><rect x="5" y="10" width="1" height="1" fill="#2c3850"/><rect x="7" y="9" width="2" height="2" fill="#4a5874"/><rect x="8" y="10" width="1" height="1" fill="#2c3850"/><rect x="1" y="13" width="2" height="2" fill="#4a5874"/><rect x="2" y="14" width="1" height="1" fill="#2c3850"/><rect x="4" y="13" width="2" height="2" fill="#4a5874"/><rect x="5" y="14" width="1" height="1" fill="#2c3850"/><rect x="7" y="13" width="2" height="2" fill="#4a5874"/><rect x="8" y="14" width="1" height="1" fill="#2c3850"/><rect x="1" y="17" width="2" height="2" fill="#4a5874"/><rect x="2" y="18" width="1" height="1" fill="#2c3850"/><rect x="4" y="17" width="2" height="2" fill="#4a5874"/><rect x="5" y="18" width="1" height="1" fill="#2c3850"/><rect x="7" y="17" width="2" height="2" fill="#4a5874"/><rect x="8" y="18" width="1" height="1" fill="#2c3850"/><rect x="1" y="21" width="2" height="2" fill="#4a5874"/><rect x="2" y="22" width="1" height="1" fill="#2c3850"/><rect x="4" y="21" width="2" height="2" fill="#4a5874"/><rect x="5" y="22" width="1" height="1" fill="#2c3850"/><rect x="7" y="21" width="2" height="2" fill="#4a5874"/><rect x="8" y="22" width="1" height="1" fill="#2c3850"/><rect x="1" y="25" width="2" height="2" fill="#4a5874"/><rect x="2" y="26" width="1" height="1" fill="#2c3850"/><rect x="4" y="25" width="2" height="2" fill="#4a5874"/><rect x="5" y="26" width="1" height="1" fill="#2c3850"/><rect x="7" y="25" width="2" height="2" fill="#4a5874"/><rect x="8" y="26" width="1" height="1" fill="#2c3850"/><rect x="1" y="29" width="2" height="2" fill="#4a5874"/><rect x="2" y="30" width="1" height="1" fill="#2c3850"/><rect x="4" y="29" width="2" height="2" fill="#4a5874"/><rect x="5" y="30" width="1" height="1" fill="#2c3850"/><rect x="7" y="29" width="2" height="2" fill="#4a5874"/><rect x="8" y="30" width="1" height="1" fill="#2c3850"/></svg>
<svg style="left:75px;top:761px" width="370" height="39" viewBox="75 761 370 39">
<g><path d="M90.500 770 h12 l2 2.500 h14 v22 h-28z" fill="#f7dc8c" stroke="#d4aa48"/><rect x="92" y="768.500" width="5" height="2" fill="#30b030"/><rect x="101" y="770.500" width="5" height="2" fill="#e03020"/><rect x="109" y="772.500" width="4" height="2" fill="#2a80e0"/>
<path d="M90.500 775 h28 v19.500 h-28z" fill="#fbe9a8" stroke="#d8b050"/>
<path d="M93.500 782 h24 v13 h-5 v-6 h-14 v6 h-5z" fill="#7cc0ee" stroke="#3a8cc8"/><rect x="99" y="790" width="13" height="5" fill="#d8eefc"/></g>
<g><rect x="164" y="770.500" width="15" height="21" fill="#c4dcf2" stroke="#8ab4dc"/><rect x="158" y="769.500" width="18" height="23" fill="#d4e6f6" stroke="#8ab4dc"/><rect x="153.500" y="768.500" width="20" height="25" fill="#b0d0f0" stroke="#6c9ed0"/>
<circle cx="164" cy="781" r="9" fill="#f58220" stroke="#fde0c0" stroke-width="1"/><path d="M160.800 775.500 l9 5.500 l-9 5.500z" fill="#fff"/></g>
<g><defs><linearGradient id="ffg" x1="0" y1="0" x2="0" y2="1"><stop offset="0" stop-color="#3aa8ea"/><stop offset=".5" stop-color="#1a6cc4"/><stop offset="1" stop-color="#0a1c6c"/></linearGradient><linearGradient id="ffo" x1="0" y1="0" x2="0" y2="1"><stop offset="0" stop-color="#f58a1e"/><stop offset=".6" stop-color="#ee6a1c"/><stop offset="1" stop-color="#e2461c"/></linearGradient><linearGradient id="ffy" x1="0" y1="0" x2="0" y2="1"><stop offset="0" stop-color="#fff0a0"/><stop offset=".45" stop-color="#ffd41c"/><stop offset="1" stop-color="#f58a1e"/></linearGradient></defs>
<circle cx="229" cy="780" r="15" fill="url(#ffo)"/>
<circle cx="231" cy="776.500" r="11" fill="url(#ffg)"/>
<path d="M216.500 768 L219 771.500 Q223 768.500 226 769 L225 772 L228.500 773.500 L226 775.500 Q225.500 778 223.500 779 Q222.500 781.500 225 783 L232 781.500 L230.500 784.500 Q226 788 220 785 L214.500 777 Z" fill="#f07a1c"/>
<path d="M224 788 Q231 791 238 786.500 Q234 795 226 794 Q218 792 215 784 Q219 789 224 788z" fill="#e8521c"/>
<path d="M235.500 766.500 Q244.500 772 243.800 783 Q242.500 789.500 237.500 792.500 Q241.500 785 239.800 777.500 Q238.500 771 235.500 766.500 Z" fill="url(#ffy)"/>
</g>
<g><rect x="277.500" y="765.500" width="28" height="24" rx="2" fill="#d8d8d8" stroke="#8c8c8c"/><rect x="280" y="768" width="23" height="18" fill="#222"/><path d="M280 772 h23 M280 776 h23 M280 780 h23" stroke="#444" stroke-width="1"/><polyline points="281,778 286,778 288,776 290,782 292,770 294,780 296,777 302,778" fill="none" stroke="#6ad030" stroke-width="1.200"/><rect x="300" y="787" width="3" height="1.500" fill="#e02020"/><rect x="288" y="790" width="7" height="3" fill="#a8a8a8"/><rect x="283" y="793" width="17" height="2" rx="1" fill="#8c8c8c"/></g>
<g><path d="M338 783 q1 -11 14 -12 q12 0 13 8 q0 5 -5 5 q-4 0 -4 4 q0 6 -7 5 q-11 -2 -11 -10z" fill="#dbe8f6" stroke="#7a9cc4"/><circle cx="343" cy="782" r="2.400" fill="#e04030"/><circle cx="347.500" cy="776" r="2.400" fill="#50b030"/><circle cx="354.500" cy="774.500" r="2.400" fill="#f0a020"/><circle cx="350" cy="787.500" r="2.400" fill="#6aa0e0"/>
<path d="M364 768 l2.500 1.500 l-12 25 l-2 -1z" fill="#e88a2a"/><path d="M363 764 q3 1 5 4 l-2.500 2 l-3 -2z" fill="#c8a070"/></g>
<g><rect x="397.500" y="770" width="27" height="21" fill="#f4f8fc"/><rect x="399" y="771.500" width="24" height="18" fill="#9cd0f4"/><path d="M399 776 q5 -1 9 4 q5 3 15 2 v7.500 h-24z" fill="#2f6e66"/><path d="M399 785 q12 -3 24 0 v4.500 h-24z" fill="#4a88bc"/><path d="M412 773 q5 -1.500 11 0 v3 q-6 -1 -11 0z" fill="#e8f4fc"/>
<path d="M396 773 v-4.500 h5 M421.500 768.500 h5 v4.500 M426.500 788 v4.500 h-5 M401 792.500 h-5 v-4.500" fill="none" stroke="#2f74c0" stroke-width="2.400"/></g>
</svg>
<div style="left:1026px;top:770.5px;width:43px;height:19px;background:#d6d6d6;border-radius:1px"></div>
<div style="left:1069px;top:776px;width:3px;height:8px;background:#d6d6d6;"></div>
<span class="t" style="left:1040px;top:772px;font-size:12px;line-height:14px;color:#222;transform:scaleX(1.1667);">---</span>
<svg style="left:1078px;top:760px" width="110" height="40" viewBox="1078 760 110 40">
<path d="M1082 780 q0 -6 6 -6 h4 v12 h-4 q-6 0 -6 -6z" fill="#000" stroke="#fff" stroke-width="1.200"/><rect x="1092" y="776" width="5" height="2.500" fill="#000" stroke="#fff" stroke-width=".8"/><rect x="1092" y="781.500" width="5" height="2.500" fill="#000" stroke="#fff" stroke-width=".8"/>
<rect x="1110" y="762" width="1" height="38" fill="#5d6f8c"/><rect x="1111" y="762" width="1" height="38" fill="#9db0cc"/>
<path d="M1117 784 h9 l-4.500 -5z" fill="#fff"/>
<path d="M1138.500 774.500 l6 -1.200 v6.700 h-6z M1146 773 l7.500 -1.500 v8.500 h-7.500z M1138.500 781.500 h6 v6.700 l-6 -1.200z M1146 781.500 h7.500 v8.500 l-7.500 -1.500z" fill="#fff"/>
<path d="M1162 778 h3 l4.500 -4 v14 l-4.500 -4 h-3z" fill="#fff" stroke="#e8e8e8" stroke-width=".5"/><path d="M1171.500 777.500 q2 3.500 0 7 M1174 775 q3.500 6 0 12" fill="none" stroke="#fff" stroke-width="1.200"/>
</svg>
<span class="t" style="left:1212px;top:766px;font-size:12px;line-height:15px;color:#fff;transform:scaleX(0.8995);">20:08</span>
<span class="t" style="left:1196.5px;top:783px;font-size:12px;line-height:15px;color:#fff;transform:scaleX(0.9412);">26/02/2016</span>
<div style="left:1266px;top:761px;width:14px;height:39px;background:linear-gradient(135deg,#a4b4cc,#64768f 50%,#72849f);border-left:1px solid #44546c;box-sizing:border-box"></div>
</body></html>
